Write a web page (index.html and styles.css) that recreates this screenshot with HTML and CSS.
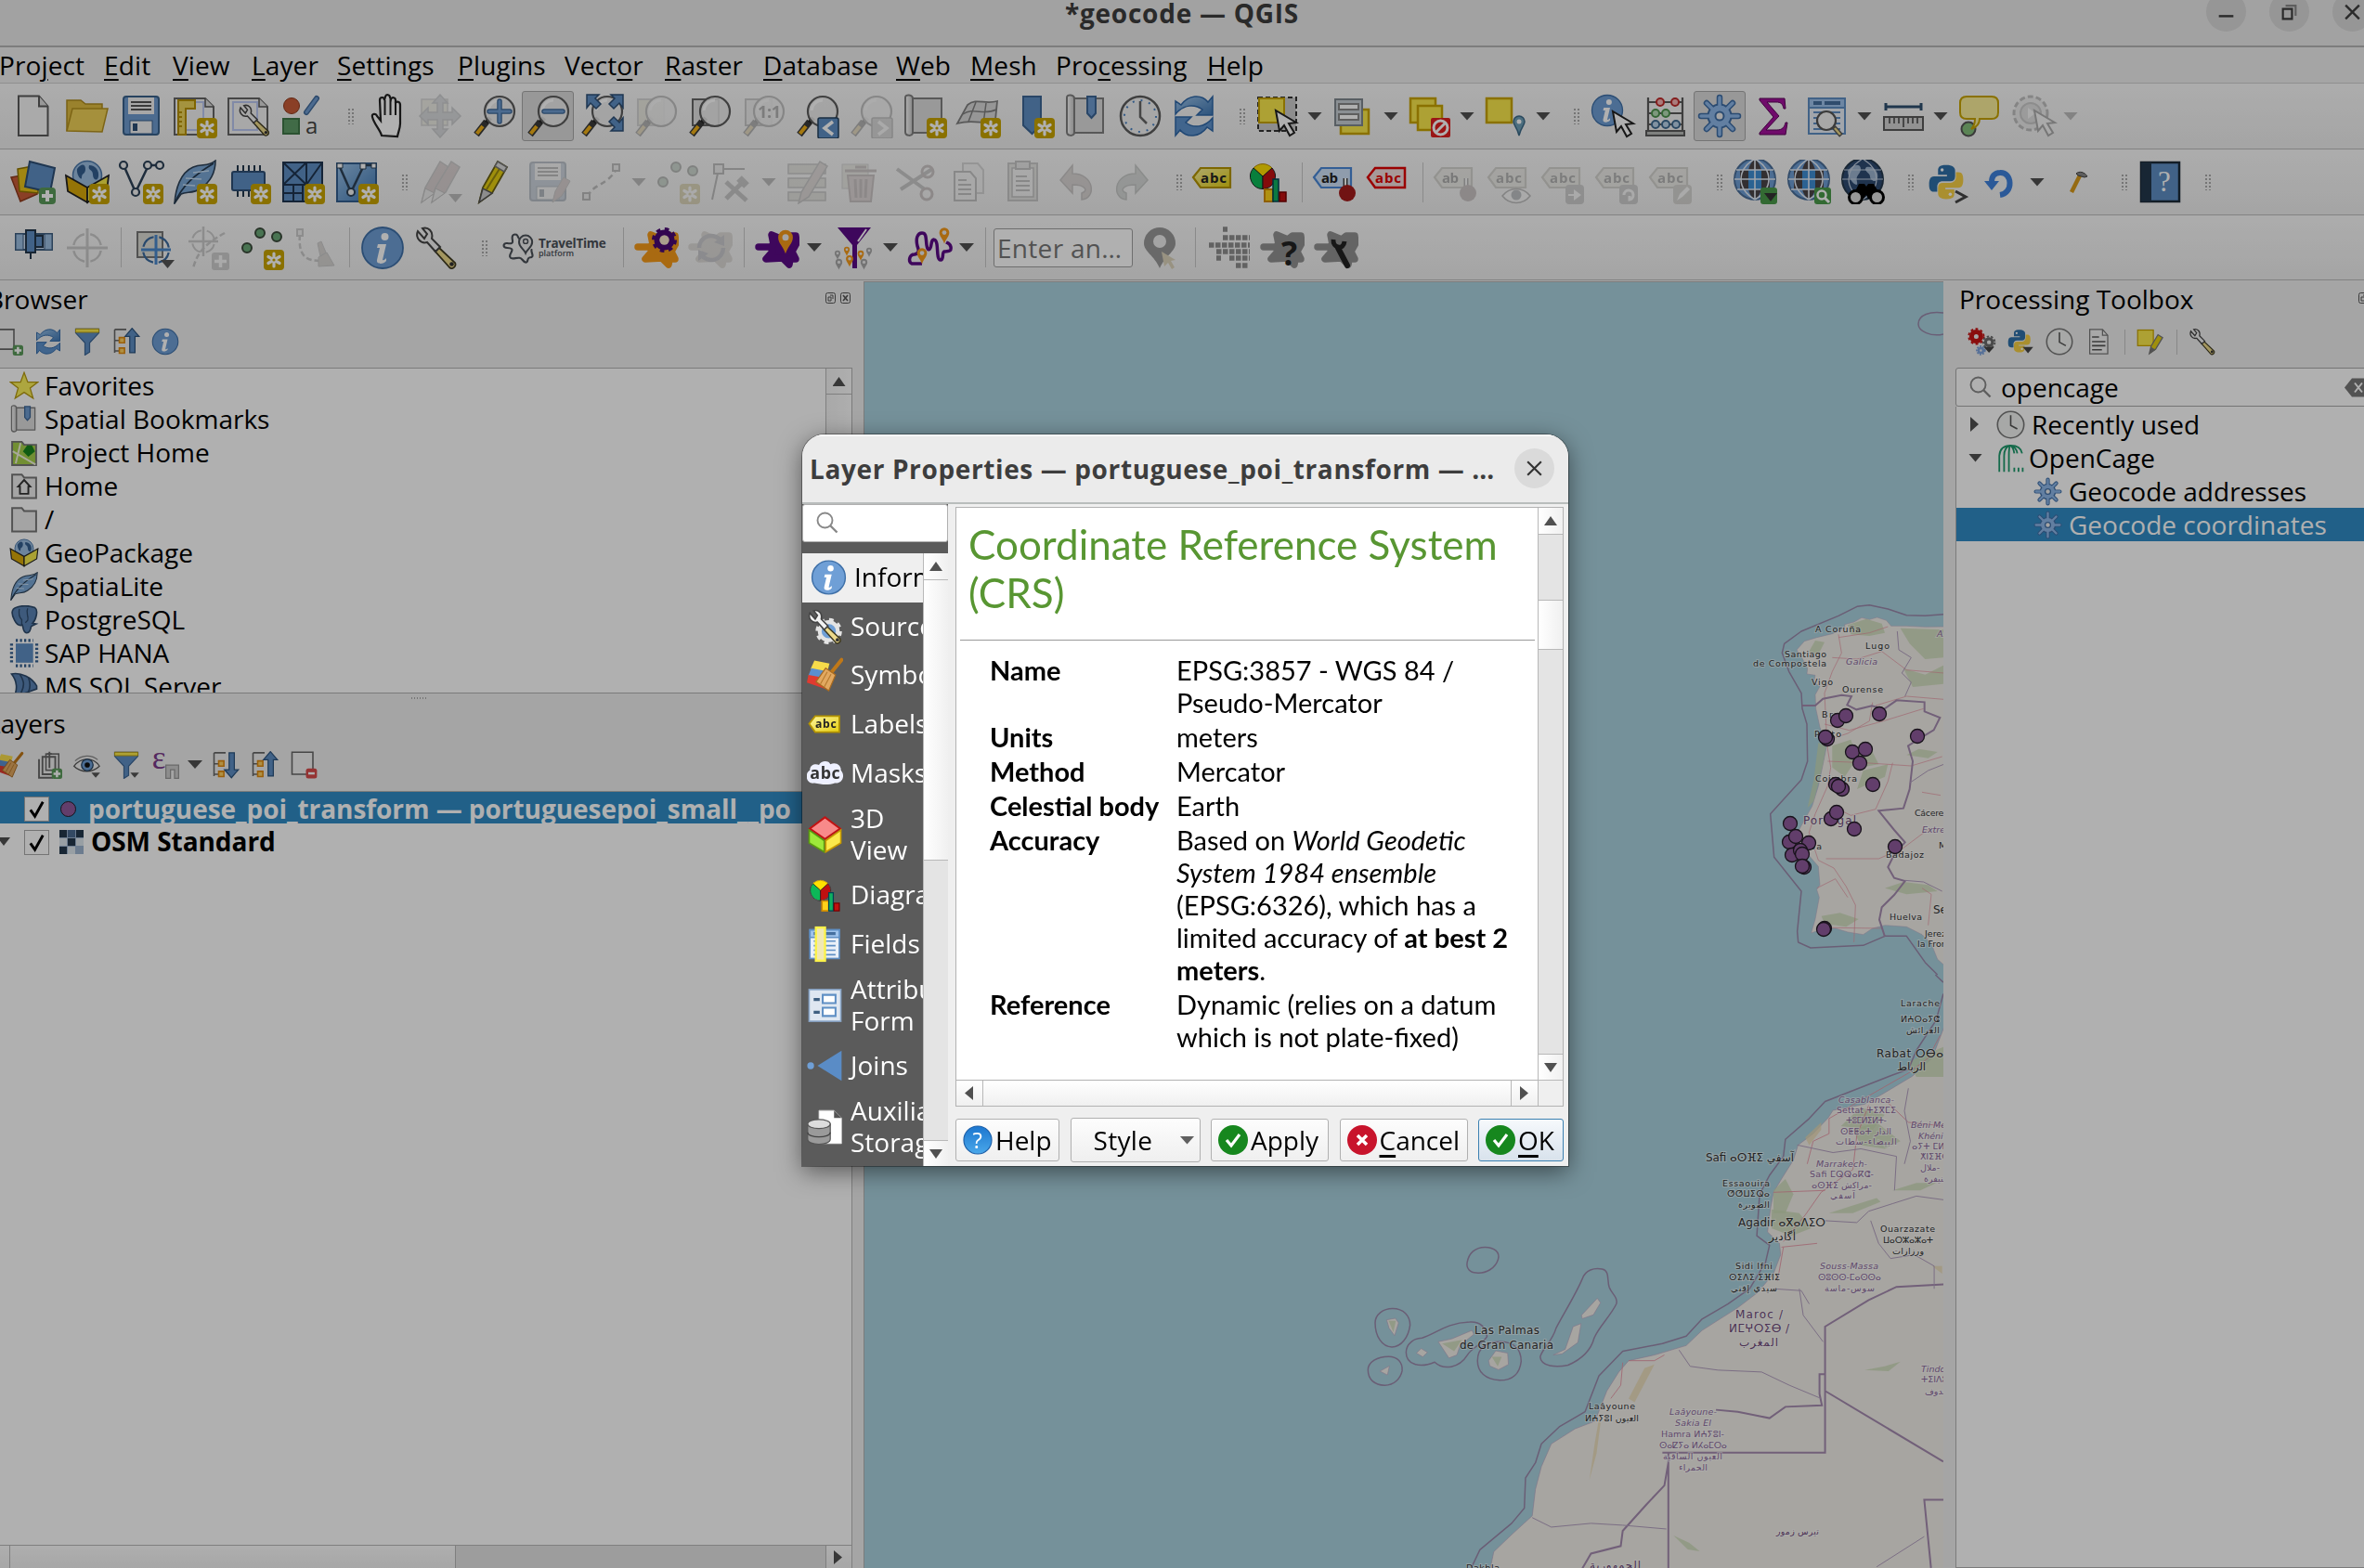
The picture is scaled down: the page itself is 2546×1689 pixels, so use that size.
FILE: index.html
```html
<!DOCTYPE html>
<html lang="en">
<head>
<meta charset="utf-8">
<title>*geocode — QGIS</title>
<link rel="stylesheet" href="styles.css">
</head>
<body>
<svg class="grads" width="0" height="0">
<defs>
<linearGradient id="gBlue" x1="0" y1="0" x2="1" y2="1"><stop offset="0" stop-color="#9cc4ea"/><stop offset="1" stop-color="#3f78b5"/></linearGradient>
<linearGradient id="gSteel" x1="0" y1="0" x2="1" y2="0"><stop offset="0" stop-color="#fff"/><stop offset="1" stop-color="#c4c4c4"/></linearGradient>
<linearGradient id="gYel" x1="0" y1="0" x2="1" y2="1"><stop offset="0" stop-color="#fdf6a0"/><stop offset="1" stop-color="#e6cf12"/></linearGradient>
<linearGradient id="gHelp" x1="0" y1="0" x2="0" y2="1"><stop offset="0" stop-color="#1c76cf"/><stop offset="1" stop-color="#4aa8ea"/></linearGradient>
</defs>
</svg>
<svg class="symbols">
<symbol id="badge" viewBox="0 0 48 48"><rect x="26" y="26" width="22" height="22" rx="4" fill="#c8a400"/><path d="M37 30v14M30.900 33.500l12.200 7M30.900 40.500l12.200-7" stroke="#fff" stroke-width="3.200" stroke-linecap="round"/><circle cx="37" cy="37" r="1.600" fill="#c8a400"/></symbol>
<symbol id="plus" viewBox="0 0 48 48"><rect x="30" y="30" width="18" height="18" rx="4" fill="#5a9a5a"/><path d="M39 33v12M33 39h12" stroke="#fff" stroke-width="4"/></symbol>
<symbol id="caretb" viewBox="0 0 48 48"><path d="M31 37h15l-7.500 9z" fill="#555"/></symbol>
<symbol id="lens" viewBox="0 0 48 48"><path d="M5 44L16 30" stroke="#3a3a3a" stroke-width="7"/><path d="M5.500 43L12 35" stroke="#f0b018" stroke-width="4"/><path d="M16 31l4-5" stroke="#222" stroke-width="5"/><circle cx="30" cy="19" r="16" fill="#ededed" fill-opacity=".9" stroke="#5c5c5c" stroke-width="2.200"/><path d="M18 18a12 12 0 0 1 12-11" stroke="#fff" stroke-width="3" fill="none"/></symbol>
<symbol id="new" viewBox="0 0 48 48"><path d="M8 2.500h22l9.500 11V45H8z" fill="#f6f6f6" stroke="#5a5a5a" stroke-width="2"/><path d="M30 2.500v11h9.500" fill="#ddd" stroke="#5a5a5a" stroke-width="2"/></symbol>
<symbol id="open" viewBox="0 0 48 48"><path d="M2 40V7h15l5 4h18v7" fill="#e0bd42" stroke="#b08d1e" stroke-width="1.500"/><path d="M2 40L8 16h38l-6 25z" fill="#efd158" stroke="#b5921f" stroke-width="1.500"/></symbol>
<symbol id="save" viewBox="0 0 48 48"><rect x="5" y="3" width="38" height="41" rx="3" fill="#6f9bd0" stroke="#39618c" stroke-width="2"/><rect x="10" y="4" width="28" height="18" fill="#f2f2f2"/><path d="M13 9h22M13 13h22M13 17h22" stroke="#555" stroke-width="2"/><rect x="12" y="29" width="24" height="14" fill="#f2f2f2" stroke="#39618c"/><rect x="15" y="32" width="5" height="8" fill="#2d4f76"/></symbol>
<symbol id="layout" viewBox="0 0 48 48"><path d="M2 5h33l9 9v30H2z" fill="#f4f4f4" stroke="#666" stroke-width="2"/><path d="M7 9h26v30H7z" fill="none" stroke="#bcc9f2" stroke-width="2"/><path d="M35 5v9h9" fill="#ddd" stroke="#555" stroke-width="1.500"/></symbol>
<symbol id="nlayout" viewBox="0 0 48 48"><use href="#layout"/><path d="M6 7h18v9H14v28H6z" fill="#eed55c" stroke="#b99300" stroke-width="2"/><path d="M6 20h4M6 25h4M6 30h4M6 35h4" stroke="#b99300" stroke-width="2"/><use href="#badge"/></symbol>
<symbol id="wr" viewBox="0 0 48 48"><path d="M26 23l-4 4 16 18c3 3 8-1 6-5z" fill="#ecd98a" stroke="#3f3a20" stroke-width="1.800"/><circle cx="40.500" cy="41.500" r="2.300" fill="#333"/><path d="M4 6c-3 7 3 14 10 12l9 10 5-5-9-9C21 6 15 1 9 3l5 6-3 5z" fill="#f2f2f2" stroke="#444" stroke-width="2"/></symbol>
<symbol id="mlayout" viewBox="0 0 48 48"><use href="#layout"/><use href="#wr" x="12" y="10" width="36" height="37"/></symbol>
<symbol id="styles" viewBox="0 0 48 48"><circle cx="12" cy="13" r="8.500" fill="#c95c38" stroke="#8f3a1c"/><path d="M28 20L39 5" stroke="#416b9c" stroke-width="6" stroke-linecap="round"/><path d="M28 20L39 5" stroke="#6f9bd0" stroke-width="3" stroke-linecap="round"/><rect x="3" y="27" width="17" height="16" fill="#5f9b68" stroke="#3f7748" stroke-width="2"/><text x="27" y="43" font-size="24" font-family="Open Sans" fill="#444">a</text></symbol>
<symbol id="hand" viewBox="0 0 48 48"><g transform="translate(3 0)"><path d="M16 45c-2-7-8-12-10-20-1-4 4-4 5-1l4 5-1-22c0-4 5-4 5 0l1-4c1-3 5-2 5 1l1 2c1-3 5-2 5 1v3c1-2 5-2 5 2v20c0 5-2 9-3 14z" fill="#fff" stroke="#222" stroke-width="2.200"/><path d="M19.500 7v16M25.500 6v17M31 9v14" stroke="#222" stroke-width="2"/></g></symbol>
<symbol id="pan" viewBox="0 0 48 48"><rect x="4" y="6" width="28" height="28" fill="#e4dfb2" stroke="#999" stroke-width="1.500"/><path d="M24 1l8 9h-5v10h10v-5l9 9-9 9v-5H27v10h5l-8 9-8-9h5V28H11v5l-9-9 9-9v5h10V10h-5z" fill="#a0aabb" stroke="#7c8490" stroke-width="1.500"/></symbol>
<symbol id="zin" viewBox="0 0 48 48"><use href="#lens"/><path d="M30 8v22M19 19h22" stroke="#3c6696" stroke-width="5.500" stroke-linecap="round"/><path d="M30 8v22M19 19h22" stroke="#6f9bd0" stroke-width="3" stroke-linecap="round"/></symbol>
<symbol id="zout" viewBox="0 0 48 48"><use href="#lens"/><path d="M20 19h20" stroke="#3c6696" stroke-width="5.500" stroke-linecap="round"/><path d="M20 19h20" stroke="#6f9bd0" stroke-width="3" stroke-linecap="round"/></symbol>
<symbol id="zfull" viewBox="0 0 48 48"><use href="#lens"/><g fill="#5f8fc4" stroke="#2d4f76" stroke-width="1.500"><path d="M8 1h13l-4 4 6 6-5 5-6-6-4 5z"/><path d="M47 1H34l4 4-6 6 5 5 6-6 4 5z"/><path d="M47 40H34l4-4-6-6 5-5 6 6 4-5z"/></g></symbol>
<symbol id="zsel" viewBox="0 0 48 48"><rect x="5" y="6" width="28" height="28" fill="#dcd9a4" stroke="#999" stroke-width="2"/><use href="#lens"/></symbol>
<symbol id="zlay" viewBox="0 0 48 48"><rect x="6" y="6" width="28" height="28" fill="#e2e2e2" stroke="#666" stroke-width="2"/><use href="#lens"/></symbol>
<symbol id="zone" viewBox="0 0 48 48"><rect x="5" y="6" width="28" height="28" fill="#e2e2e2" stroke="#777" stroke-width="2"/><use href="#lens"/><text x="18" y="26" font-size="18" font-weight="700" font-family="Open Sans" textLength="25" fill="#333">1:1</text></symbol>
<symbol id="zlast" viewBox="0 0 48 48"><use href="#lens"/><rect x="25" y="26" width="22" height="22" rx="2" fill="#5f8fc4" stroke="#24415f" stroke-width="1.500"/><path d="M41 30l-9 7 9 7" fill="none" stroke="#fff" stroke-width="3.500"/></symbol>
<symbol id="znext" viewBox="0 0 48 48"><use href="#lens"/><rect x="25" y="26" width="22" height="22" rx="2" fill="#aaa" stroke="#666" stroke-width="1.500"/><path d="M32 30l9 7-9 7" fill="none" stroke="#fff" stroke-width="3.500"/></symbol>
<symbol id="mapv" viewBox="0 0 48 48"><path d="M11 5h31v37H11z" fill="#dedede" stroke="#808080" stroke-width="2"/><path d="M11 42c0 4-8 4-8-1V4c0-4 8-3 8 1z" fill="url(#gSteel)" stroke="#808080" stroke-width="2"/></symbol>
<symbol id="nmap" viewBox="0 0 48 48"><use href="#mapv"/><use href="#badge"/></symbol>
<symbol id="n3d" viewBox="0 0 48 48"><path d="M1 32L12 12c10-8 18 0 32-4l-2 20c-10 8-20-2-41 4z" fill="#dadada" stroke="#808080" stroke-width="1.800"/><path d="M7 22c12-8 22 2 36-5M21 9l-8 21M32 10l-3 22" fill="none" stroke="#808080" stroke-width="1.500"/><use href="#badge"/></symbol>
<symbol id="nbm" viewBox="0 0 48 48"><path d="M14 3h19v31l-9.500 9L14 34z" fill="#5f8fc4" stroke="#3c6696" stroke-width="2"/><use href="#badge"/></symbol>
<symbol id="bm" viewBox="0 0 48 48"><use href="#mapv"/><path d="M25 3h9v18l-4.500 5L25 21z" fill="#6f9bd0" stroke="#3c6696" stroke-width="2"/></symbol>
<symbol id="clock" viewBox="0 0 48 48"><circle cx="24" cy="24" r="21" fill="#f2f2f2" stroke="#5c5c5c" stroke-width="2.500"/><circle cx="24" cy="24" r="17" fill="none" stroke="#4a83c4" stroke-width="2" stroke-dasharray="2 6.900"/><path d="M24 8v17l7 7" fill="none" stroke="#666" stroke-width="2.500"/></symbol>
<symbol id="clk" viewBox="0 0 48 48"><circle cx="24" cy="24" r="22" fill="#f2f4f2" stroke="#777" stroke-width="2.500"/><path d="M24 8v17l11 6" fill="none" stroke="#555" stroke-width="2.500"/></symbol>
<symbol id="refresh" viewBox="0 0 48 48"><path d="M4 22V8l6 4C18 1 32 0 39 9l5-6v20H27l6-6c-8-6-20-6-29 5z" fill="url(#gBlue)" stroke="#2f68a8" stroke-width="1.500"/><path d="M44 26v14l-6-4C30 47 16 48 9 39l-5 6V25h17l-6 6c8 6 20 6 29-5z" fill="#5f93cc" stroke="#2f68a8" stroke-width="1.500"/></symbol>
<symbol id="cursor" viewBox="0 0 48 48"><path d="M22 18l4 22 5-6 6 11 5-3-6-10 8-1z" fill="#fff" stroke="#222" stroke-width="2"/></symbol>
<symbol id="select" viewBox="0 0 48 48"><rect x="3" y="4" width="41" height="36" fill="#ccc" stroke="#333" stroke-width="2" stroke-dasharray="5 3"/><rect x="4" y="5" width="27" height="26" fill="#fbe94c" stroke="#c8a400" stroke-width="2"/><use href="#cursor"/></symbol>
<symbol id="selform" viewBox="0 0 48 48"><rect x="10" y="17" width="30" height="26" fill="#fbe94c" stroke="#c8a400" stroke-width="2.500"/><rect x="4" y="6" width="29" height="28" fill="#c8cfd6" stroke="#808890" stroke-width="2"/><rect x="8" y="11" width="21" height="6" fill="#fff" stroke="#888" stroke-width="2"/><rect x="8" y="22" width="21" height="6" fill="#fff" stroke="#888" stroke-width="2"/></symbol>
<symbol id="desel" viewBox="0 0 48 48"><rect x="3" y="5" width="27" height="26" fill="#fbe94c" stroke="#c8a400" stroke-width="2.500"/><rect x="11" y="13" width="26" height="26" fill="#fbe94c" stroke="#c8a400" stroke-width="2.500"/><rect x="25" y="26" width="21" height="21" rx="2" fill="#e02020"/><circle cx="35.500" cy="36.500" r="7.500" fill="none" stroke="#fff" stroke-width="3"/><path d="M30 42l11-11" stroke="#fff" stroke-width="3"/></symbol>
<symbol id="selloc" viewBox="0 0 48 48"><rect x="3" y="5" width="27" height="26" fill="#fbe94c" stroke="#c8a400" stroke-width="2.500"/><path d="M38 45c-2-9-6-11-6-15a6 6 0 0 1 12 0c0 4-4 6-6 15z" fill="#6ea0b8" stroke="#3c6a88" stroke-width="1.500"/><circle cx="38" cy="30" r="2.500" fill="#fff"/></symbol>
<symbol id="info" viewBox="0 0 48 48"><circle cx="24" cy="24" r="22" fill="#6f9fd6" stroke="#3f70a8" stroke-width="1.800"/><circle cx="26.500" cy="12" r="4" fill="#fff"/><path d="M19 20h9l-4 17c1 1 3-1 4-2v3c-3 4-11 4-10-1l3-13h-3z" fill="#fff"/></symbol>
<symbol id="identify" viewBox="0 0 48 48"><use href="#info" x="1" y="0" width="36" height="36"/><use href="#cursor" x="3" y="1"/></symbol>
<symbol id="abacus" viewBox="0 0 48 48"><path d="M5 4v36M42 4v36M5 9h37M5 21h37M5 33h37" stroke="#5a5a5a" stroke-width="2.200"/><rect x="3" y="40" width="41" height="5" fill="#b9bcb9" stroke="#5a5a5a" stroke-width="2"/><g stroke-width="2" fill="#f6b4b4" stroke="#c02a2a"><circle cx="18" cy="9" r="4"/><circle cx="34" cy="9" r="4"/></g><g stroke-width="2" fill="#b5dcb5" stroke="#4f944f"><circle cx="13" cy="21" r="4"/><circle cx="24" cy="21" r="4"/></g><g stroke-width="2" fill="#bcd4ea" stroke="#3f6a90"><circle cx="13" cy="33" r="4"/><circle cx="24" cy="33" r="4"/><circle cx="35" cy="33" r="4"/></g></symbol>
<symbol id="gear" viewBox="0 0 48 48"><g stroke="#3f6ea6" stroke-width="6.500" stroke-linecap="round"><path d="M24 4v40M4 24h40M10 10l28 28M38 10L10 38"/></g><circle cx="24" cy="24" r="12.500" fill="#8fb8ea" stroke="#3f6ea6" stroke-width="2"/><g stroke="#8fb8ea" stroke-width="3.500" stroke-linecap="round"><path d="M24 4v12M24 44V32M4 24h12M44 24H32M10 10l8 8M38 38l-8-8M38 10l-8 8M10 38l8-8"/></g><circle cx="24" cy="24" r="4.500" fill="#eee" stroke="#3f6ea6" stroke-width="2"/></symbol>
<symbol id="sigma" viewBox="0 0 48 48"><path d="M9 5h27l1 11h-2c-1-5-3-7-8-7H17l13 15-14 15h12c5 0 8-3 9-8h2l-2 13H9v-2l15-17L9 7z" fill="#a3109c" stroke="#5c085a" stroke-width="1"/></symbol>
<symbol id="table" viewBox="0 0 48 48"><rect x="4" y="5" width="39" height="38" fill="#eaf0f8" stroke="#5f8fc4" stroke-width="2"/><path d="M4 5h39v10H4z" fill="#9fc3ec" stroke="#5f8fc4" stroke-width="2"/><path d="M9 10h9M21 10h17" stroke="#456f9f" stroke-width="4"/><path d="M9 20h29M9 26h29M9 32h29M9 38h29" stroke="#5f8fc4" stroke-width="2"/></symbol>
<symbol id="tbl" viewBox="0 0 48 48"><use href="#table"/><path d="M31 36l8 9" stroke="#555" stroke-width="5"/><path d="M32 37l6 7" stroke="#ecd98a" stroke-width="2.500"/><circle cx="23" cy="29" r="10" fill="#f2f2f2" stroke="#555" stroke-width="2.200"/></symbol>
<symbol id="ruler" viewBox="0 0 48 48"><path d="M5 14h38M5 10v8M43 10v8" stroke="#2f5070" stroke-width="3"/><rect x="3" y="25" width="42" height="14" fill="#d4d4d4" stroke="#5a5a5a" stroke-width="2"/><path d="M9 26v6M14 26v6M19 26v6M24 26v10M29 26v6M34 26v6M39 26v6" stroke="#444" stroke-width="1.500"/></symbol>
<symbol id="tip" viewBox="0 0 48 48"><circle cx="12" cy="38" r="7.500" fill="#84c07c" stroke="#555" stroke-width="2"/><path d="M10 3h27q7 0 7 7v10q0 7-7 7H24c0 6-3 9-9 11 3-3 4-7 4-11h-9q-7 0-7-7V10q0-7 7-7z" fill="#fbf09a" stroke="#c8a400" stroke-width="2"/></symbol>
<symbol id="rungear" viewBox="0 0 48 48"><circle cx="21" cy="21" r="18" fill="#ddd" stroke="#555" stroke-width="3" stroke-dasharray="6 3"/><circle cx="21" cy="21" r="11" fill="#bbb" stroke="#777" stroke-width="2"/><path d="M18 15l8 6-8 6z" fill="#fff"/><use href="#cursor" x="3"/></symbol>
<symbol id="dsrc" viewBox="0 0 48 48"><path d="M0 19l22-4 6 22-18 8z" fill="#c95c38" stroke="#8f3a1c" stroke-width="1.500"/><path d="M7 10l22-4v30l-20-2z" fill="#e8c21a" stroke="#8f7400" stroke-width="1.500"/><path d="M20 2l27 7-5 26-27-6z" fill="#5f8fc4" stroke="#2d4f76" stroke-width="2"/><use href="#plus"/></symbol>
<symbol id="gpkg" viewBox="0 0 48 48"><circle cx="24" cy="17" r="15.500" fill="#9dbfe2" stroke="#4a78aa" stroke-width="1.500"/><path d="M13 10c4-6 9-6 9 0s-4 4-4 9-6-3-5-9zM26 6c7 0 11 6 10 12s-6 4-6-2-6-4-4-10z" fill="#335f90"/><path d="M1 17l23 13v16L3 34z" fill="#d8a80a" stroke="#222" stroke-width="1.800"/><path d="M47 17L24 30v16l21-12z" fill="#f6ea4a" stroke="#222" stroke-width="1.800"/></symbol>
<symbol id="ngpkg" viewBox="0 0 48 48"><use href="#gpkg"/><use href="#badge"/></symbol>
<symbol id="nshp" viewBox="0 0 48 48"><path d="M6 8l12 27L32 6h13" fill="none" stroke="#2d4258" stroke-width="2.500"/><g fill="#f2f2f2" stroke="#2d4258" stroke-width="2.200"><circle cx="5" cy="6" r="4"/><circle cx="31" cy="6" r="4"/><circle cx="44" cy="6" r="4"/><circle cx="18" cy="35" r="4"/></g><use href="#badge"/></symbol>
<symbol id="feather" viewBox="0 0 48 48"><path d="M2 47C3 32 8 14 22 8 32 4 38 8 46 1c0 12-4 22-16 30-8 6-15 3-21 6z" fill="#7aa7d6" stroke="#2d4258" stroke-width="1.600"/><path d="M2 47C10 28 24 16 44 4" stroke="#24384c" stroke-width="1.600" fill="none"/><path d="M14 20l17 1M11 27l13 1M22 14l17-2" stroke="#c4ddf4" stroke-width="1.500"/></symbol>
<symbol id="nspl" viewBox="0 0 48 48"><use href="#feather"/><use href="#badge"/></symbol>
<symbol id="chip" viewBox="0 0 48 48"><path d="M12 6v8M18 6v8M24 6v8M30 6v8M36 6v8M12 32v8M18 32v8M24 32v8" stroke="#24384c" stroke-width="2"/><rect x="6" y="13" width="35" height="20" rx="2" fill="#5f8fc4" stroke="#2d4f76" stroke-width="2"/><use href="#badge"/></symbol>
<symbol id="nmesh" viewBox="0 0 48 48"><rect x="3" y="3" width="42" height="42" fill="#5f8fc4"/><path d="M3 3h42v42H3zM3 27h42M28 3v24M3 3l25 24M28 3L3 27M45 3L28 27M14 27v18M24 27v18M3 36h21" fill="none" stroke="#1f3550" stroke-width="2"/><use href="#badge"/></symbol>
<symbol id="nvirt" viewBox="0 0 48 48"><rect x="3" y="4" width="42" height="41" fill="url(#gBlue)" stroke="#335f90" stroke-width="2"/><path d="M6 8l12 27L32 6h12" fill="none" stroke="#2d4258" stroke-width="2.500"/><circle cx="18" cy="35" r="4" fill="#f2f2f2" stroke="#2d4258" stroke-width="2"/><path d="M3 4h6v5H3zM28 4h6v6h-6zM40 4h5v5h-5z" fill="#fff" stroke="#2d4258"/><use href="#badge"/></symbol>
<symbol id="pen" viewBox="0 0 48 48"><g transform="translate(-2 0)"><path d="M10 46l4-16L30 2l10 6-16 28z" fill="#e6cf12" stroke="#6a6010" stroke-width="1.800"/><path d="M18 32L35 5" stroke="#9a8a10" stroke-width="2"/><path d="M30 2l10 6-3 5-10-6z" fill="#ddd" stroke="#777" stroke-width="1.500"/><path d="M10 46l4-15 10 5z" fill="#ccc" stroke="#555" stroke-width="1.500"/></g></symbol>
<symbol id="pens" viewBox="0 0 48 48"><g fill="#b98a8a" stroke="#777" stroke-width="1.500"><path d="M4 46l4-16L24 2l9 6-14 27z"/><path d="M15 46l4-16L36 2l9 6-15 27z"/></g><path d="M4 46l4-15 10 5zM15 46l4-15 10 5z" fill="#ddd" stroke="#666"/><path d="M33 37h15l-7.500 9z" fill="#555"/></symbol>
<symbol id="savep" viewBox="0 0 48 48"><use href="#save"/><path d="M29 46l3-12 9-15 7 4-9 16z" fill="#b98a8a" stroke="#777"/></symbol>
<symbol id="digl" viewBox="0 0 48 48"><path d="M9 40C14 26 30 28 40 10" fill="none" stroke="#555" stroke-width="2.500" stroke-dasharray="6 4"/><path d="M4 36h7v7H4zM36 5h7v7h-7z" fill="#ddd" stroke="#555" stroke-width="2"/></symbol>
<symbol id="pts" viewBox="0 0 48 48"><g fill="#6aa878" stroke="#3a4a3a" stroke-width="2"><circle cx="22" cy="8" r="5"/><circle cx="40" cy="12" r="5"/><circle cx="8" cy="24" r="5"/></g><use href="#badge"/></symbol>
<symbol id="vert" viewBox="0 0 48 48"><path d="M10 10h28M10 10L3 43" stroke="#555" stroke-width="2"/><path d="M5 5h10v10H5z" fill="#ddd" stroke="#555" stroke-width="2"/><path d="M18 42l18-18M18 24l22 20" stroke="#777" stroke-width="5"/><path d="M32 20l8 8" stroke="#777" stroke-width="8"/></symbol>
<symbol id="form" viewBox="0 0 48 48"><path d="M3 5h40v10H3zM3 20h40v10H3zM3 35h40v9H3z" fill="#c9c9b0" stroke="#777" stroke-width="1.500"/><path d="M14 47l3-12L37 2l8 5-20 33z" fill="#c9aaa0" stroke="#777" stroke-width="1.500"/></symbol>
<symbol id="trash" viewBox="0 0 48 48"><rect x="3" y="5" width="28" height="26" fill="#d8d8b8" stroke="#999"/><path d="M9 17h28l-3 28H12z" fill="#c9a0a0" stroke="#8a6a6a" stroke-width="2"/><path d="M6 12h34M17 8h12M17 21l1 20M23 21v20M29 21l-1 20" stroke="#8a6a6a" stroke-width="3" fill="none"/></symbol>
<symbol id="cut" viewBox="0 0 48 48"><path d="M4 10l30 22M8 32L42 10" stroke="#777" stroke-width="4"/><circle cx="37" cy="13" r="6" fill="none" stroke="#8a6a6a" stroke-width="3"/><circle cx="36" cy="37" r="6" fill="none" stroke="#8a6a6a" stroke-width="3"/></symbol>
<symbol id="copy" viewBox="0 0 48 48"><path d="M17 4h16l6 7v25H17z" fill="#eee" stroke="#999" stroke-width="2"/><path d="M8 13h17l6 7v24H8z" fill="#f4f4f4" stroke="#666" stroke-width="2"/><path d="M12 22h9M12 27h14M12 32h14M12 37h14" stroke="#666" stroke-width="2"/></symbol>
<symbol id="paste" viewBox="0 0 48 48"><rect x="8" y="4" width="31" height="40" fill="#c8c8b8" stroke="#777" stroke-width="2"/><path d="M12 9h23v31H12z" fill="#f4f4f4" stroke="#666" stroke-width="1.500"/><rect x="16" y="2" width="15" height="8" fill="#ccc" stroke="#666" stroke-width="2"/><path d="M16 18h12M16 23h15M16 28h15M16 33h15" stroke="#666" stroke-width="2"/></symbol>
<symbol id="undo" viewBox="0 0 48 48"><path d="M6 22L19 6v9c24 0 26 27 10 28v-7c7-2 5-9-10-9v9z" fill="#b09a90" stroke="#776a66" stroke-width="1.500"/></symbol>
<symbol id="redo" viewBox="0 0 48 48"><path d="M42 22L29 6v9C5 15 3 42 19 43v-7c-7-2-5-9 10-9v9z" fill="#9aa8a0" stroke="#6a776f" stroke-width="1.500"/></symbol>
<symbol id="abc" viewBox="0 0 48 48"><path d="M3 19l8-10h32v21H11z" fill="url(#gYel)" stroke="#b59500" stroke-width="2.200"/><text x="11" y="25" font-size="15" font-weight="700" font-family="Open Sans" textLength="28" fill="#222">abc</text></symbol>
<symbol id="diag" viewBox="0 0 48 48"><circle cx="18" cy="18" r="13.500" fill="#fff"/><path d="M18 18L8 9a13.500 13.500 0 0 1 20 0z" fill="#ffe000" stroke="#b88a00"/><path d="M18 18L8 9a13.500 13.500 0 0 0 10 22.500z" fill="#0db858" stroke="#222"/><path d="M18 18L28 9a13.500 13.500 0 0 1-10 22.500z" fill="#c01010" stroke="#222"/><path d="M20 32h9v13h-9z" fill="#ffd21a" stroke="#d08a00" stroke-width="2"/><path d="M29 21h6v24h-6z" fill="#10b060" stroke="#045" stroke-width="1.500"/><path d="M36 35h7v10h-7z" fill="#c01010" stroke="#700" stroke-width="1.500"/></symbol>
<symbol id="abpin" viewBox="0 0 48 48"><path d="M3 19l8-10h32v21H11z" fill="#cfe2fa" stroke="#4a88d8" stroke-width="2.200"/><text x="11" y="25" font-size="15" font-weight="700" font-family="Open Sans" textLength="18" fill="#222">ab</text><path d="M37 20v14" stroke="#444" stroke-width="5"/><path d="M37 20v12" stroke="#fff" stroke-width="2"/><circle cx="39" cy="36" r="9" fill="#a41c1c"/></symbol>
<symbol id="abpinoff" viewBox="0 0 48 48"><path d="M3 19l8-10h32v21H11z" fill="#e2deC4" stroke="#99957a" stroke-width="2.200"/><text x="11" y="25" font-size="15" font-weight="700" font-family="Open Sans" textLength="18" fill="#222">ab</text><path d="M37 20v14" stroke="#444" stroke-width="5"/><path d="M37 20v12" stroke="#fff" stroke-width="2"/><circle cx="39" cy="36" r="9" fill="#8a6a6a"/></symbol>
<symbol id="abred" viewBox="0 0 48 48"><path d="M3 19l8-10h32v21H11z" fill="#f2dede" stroke="#e00000" stroke-width="2.500"/><text x="11" y="25" font-size="15" font-weight="700" font-family="Open Sans" textLength="28" fill="#e00000">abc</text></symbol>
<symbol id="abcoff" viewBox="0 0 48 48"><path d="M3 19l8-10h32v21H11z" fill="#e2dec4" stroke="#99957a" stroke-width="2.200"/><text x="11" y="25" font-size="15" font-weight="700" font-family="Open Sans" textLength="28" fill="#333">abc</text></symbol>
<symbol id="abeye" viewBox="0 0 48 48"><use href="#abcoff"/><path d="M18 39c8-10 22-10 30 0-8 10-22 10-30 0z" fill="#fff" stroke="#555" stroke-width="1.500"/><circle cx="33" cy="38" r="5.500" fill="#567"/></symbol>
<symbol id="abmv" viewBox="0 0 48 48"><use href="#abcoff"/><rect x="28" y="27" width="20" height="21" rx="4" fill="#888"/><path d="M31 37h6v-5l8 6-8 6v-5h-6z" fill="#fff"/></symbol>
<symbol id="abrot" viewBox="0 0 48 48"><use href="#abcoff"/><rect x="28" y="27" width="20" height="21" rx="4" fill="#888"/><path d="M33 38a5 5 0 1 1 6 5v-4" fill="none" stroke="#fff" stroke-width="3"/></symbol>
<symbol id="abed" viewBox="0 0 48 48"><use href="#abcoff"/><rect x="28" y="27" width="20" height="21" rx="4" fill="#a09c88"/><path d="M32 44l3-7 8-8 3 3-8 8z" fill="#fff"/></symbol>
<symbol id="globe" viewBox="0 0 48 48"><circle cx="24" cy="21" r="22" fill="#6f9fd6" stroke="#4a6f9a" stroke-width="2"/><path d="M8 11h32v21H8z" fill="#4a4448"/><path d="M17 11h14v21H17z" fill="#3f8ed4"/><path d="M17 11c2-7 5-11 7-11s5 4 7 11zM17 32c2 7 5 10 7 10s5-3 7-10z" fill="#4a4448"/><path d="M4 11h40M2 21h44M5 32h38M24-1v44M24-1c-20 12-20 32 0 44M24-1c20 12 20 32 0 44" fill="none" stroke="#e6eef8" stroke-width="1.600"/></symbol>
<symbol id="globea" viewBox="0 0 48 48"><use href="#globe"/><rect x="30" y="30" width="18" height="18" rx="3" fill="#4a9a4a"/><path d="M34 36h14l-7 9z" fill="#333"/></symbol>
<symbol id="globeb" viewBox="0 0 48 48"><use href="#globe"/><rect x="30" y="30" width="18" height="18" rx="3" fill="#4a9a4a"/><circle cx="38" cy="38" r="4.500" fill="none" stroke="#fff" stroke-width="2.500"/><path d="M41 41l5 5" stroke="#fff" stroke-width="3"/></symbol>
<symbol id="globec" viewBox="0 0 48 48"><circle cx="24" cy="21" r="22" fill="#2d4a72" stroke="#24384c" stroke-width="2"/><path d="M8 12c6-8 14-8 14-2s-6 6-4 14-10-2-10-12zM28 8c8-2 14 6 12 12s-8 2-8-2-8-6-4-10z" fill="#9db4cf"/><path d="M4 11h40M2 21h44M24-1c-20 12-20 32 0 44M24-1c20 12 20 32 0 44" fill="none" stroke="#c6d2e2" stroke-width="1.200"/><path d="M14 38l6-12h6l2 3 2-3h6l7 12-8 4h-5l-2-4-3 4h-6z" fill="#000"/><circle cx="16.500" cy="40.500" r="7" fill="#ddd" stroke="#000" stroke-width="3"/><circle cx="39.500" cy="40.500" r="7" fill="#ddd" stroke="#000" stroke-width="3"/></symbol>
<symbol id="pyb" viewBox="0 0 48 48"><path d="M24 3c-9 0-10 3-10 7v5h11v2H9c-5 0-6 5-6 10s1 9 6 9h4v-6c0-4 2-7 7-7h9c4 0 6-2 6-6V10c0-4-3-7-11-7z" fill="#2f70a8"/><circle cx="19" cy="9" r="2" fill="#fff"/><path d="M24 45c9 0 10-3 10-7v-5H23v-2h16c5 0 6-5 6-10s-1-9-6-9h-3v6c0 4-3 7-7 7h-9c-4 0-6 2-6 6v7c0 4 3 7 10 7z" fill="#f6cf45"/><circle cx="29" cy="39" r="2" fill="#fff"/></symbol>
<symbol id="py" viewBox="0 0 48 48"><use href="#pyb" x="3" y="3" width="42" height="42"/><path d="M34 34l11 6-11 6" fill="none" stroke="#444" stroke-width="3"/></symbol>
<symbol id="reload" viewBox="0 0 48 48"><path d="M24 38c15-2 13-25 0-24-6 0-9 4-9 10" fill="none" stroke="#3f82dc" stroke-width="6"/><path d="M7 23h16l-8 10z" fill="#3f82dc"/></symbol>
<symbol id="hammer" viewBox="0 0 48 48"><path d="M19 35L28 17" stroke="#d89a1a" stroke-width="4.500"/><path d="M24 15c3-3 9-2 12 3l-3 1-7-2z" fill="#888" stroke="#444"/></symbol>
<symbol id="book" viewBox="0 0 48 48"><rect x="4" y="3" width="41" height="42" fill="#5f8fc4" stroke="#1c2a38" stroke-width="2.500"/><rect x="4" y="3" width="11" height="42" fill="#24384c"/><text x="22" y="34" font-size="31" font-family="Liberation Serif" fill="#fff">?</text></symbol>
<symbol id="mover" viewBox="0 0 48 48"><g transform="translate(2 0)"><path d="M3 9h39v17H3z" fill="#cfe0f4" stroke="#3f5f80" stroke-width="2"/><path d="M3 9h8v17H3zM34 9h8v17h-8z" fill="#9dbfe2" stroke="#3f5f80"/><path d="M14 5h10v24H14zM19 29v7M24 11h8v12h-8z" fill="#5f8fc4" stroke="#24384c" stroke-width="2"/></g></symbol>
<symbol id="cross" viewBox="0 0 48 48"><circle cx="24" cy="24" r="15" fill="none" stroke="#777" stroke-width="2.500" stroke-dasharray="17 6.500" stroke-dashoffset="-3"/><path d="M24 3v42M2 24h44" stroke="#777" stroke-width="3"/></symbol>
<symbol id="gcp" viewBox="0 0 48 48"><path d="M6 7h27v27H6z" fill="#dcdcd6" stroke="#777" stroke-width="2"/><circle cx="26" cy="26" r="14" fill="none" stroke="#3a6a9f" stroke-width="2.200" stroke-dasharray="16 6" stroke-dashoffset="-3"/><path d="M26 10v32M10 26h32" stroke="#4a88cc" stroke-width="3"/><use href="#caretb"/></symbol>
<symbol id="gcpa" viewBox="0 0 48 48"><circle cx="19" cy="17" r="12" fill="none" stroke="#777" stroke-width="2" stroke-dasharray="13 6" stroke-dashoffset="-3"/><path d="M19 1v32M3 17h32" stroke="#777" stroke-width="2.500"/><path d="M42 8C20 20 12 30 8 46" fill="none" stroke="#777" stroke-width="2.500" stroke-dasharray="6 3"/><rect x="28" y="29" width="19" height="19" rx="3" fill="#888"/><path d="M37.500 32v13M31 38.500h13" stroke="#fff" stroke-width="3.500"/></symbol>
<symbol id="brush" viewBox="0 0 48 48"><path d="M7 10c-2 22 6 28 22 28" fill="none" stroke="#777" stroke-width="2.500" stroke-dasharray="6 3"/><rect x="4" y="4" width="6" height="7" fill="#ddd" stroke="#777" stroke-width="2"/><path d="M26 19l4-2 5 12-6 4zM27 34l9-5 8 14-17 1z" fill="#a89a88" stroke="#777"/></symbol>
<symbol id="puz" viewBox="0 0 48 48"><path d="M18 10l2 10-3 3H4h13l2 5-7 8 18-1 7 7 1-6h6l-4-8 5-9-1-8h-9l-5 4z" fill="currentColor" stroke="currentColor" stroke-width="7.500" stroke-linejoin="round"/></symbol>
<symbol id="ttg" viewBox="0 0 48 48"><use href="#puz" color="#f59a1a"/><circle cx="32.500" cy="15.500" r="11" fill="#4a0a74"/><circle cx="32.500" cy="15.500" r="11.500" fill="none" stroke="#4a0a74" stroke-width="4" stroke-dasharray="4.500 4.530"/><circle cx="32.500" cy="15.500" r="5.200" fill="#f6e6cc"/></symbol>
<symbol id="ttr" viewBox="0 0 48 48"><use href="#puz" color="#b8aa98"/><path d="M12 24a13 13 0 0 1 24-7M38 24a13 13 0 0 1-24 7" fill="none" stroke="#777790" stroke-width="4.500"/><path d="M39 10v12l-11-4zM11 38V26l11 4z" fill="#777790"/></symbol>
<symbol id="pinm" viewBox="0 0 24 32"><path d="M12 31C9 22 3 18 3 11a9 9 0 0 1 18 0c0 7-6 11-9 20z" fill="#f59a1a"/><circle cx="12" cy="11" r="4" fill="#eee"/></symbol>
<symbol id="pingr" viewBox="0 0 24 32"><path d="M12 31C9 22 3 18 3 11a9 9 0 0 1 18 0c0 7-6 11-9 20z" fill="#a8a8a8"/><circle cx="12" cy="11" r="4" fill="#eee"/></symbol>
<symbol id="ttp" viewBox="0 0 48 48"><use href="#puz" color="#5b0b86"/><use href="#pinm" x="19" y="3" width="28" height="28"/></symbol>
<symbol id="ttf" viewBox="0 0 48 48"><path d="M7 2h36L28 21v25h-5V21z" fill="#5b0b86"/><path d="M38 4L29 17" stroke="#fff" stroke-width="2"/><use href="#pinm" x="11" y="22" width="12" height="11"/><use href="#pinm" x="13" y="31" width="14" height="14"/><use href="#pinm" x="26" y="26" width="12" height="12"/><use href="#pingr" x="1" y="26" width="12" height="11"/><use href="#pingr" x="1" y="35" width="15" height="13"/><use href="#pingr" x="35" y="23" width="12" height="11"/><use href="#pingr" x="28" y="35" width="15" height="13"/></symbol>
<symbol id="ttroute" viewBox="0 0 48 48"><path d="M16 41H5c-4-2-3-10 3-10 5-1 5-4 3-9-2-8 0-14 5-14s4 6 5 13 4 6 5-1 5-6 6 0 0 17 4 17 1-8 4-9 8 1 7-5c-1-4-3-4-5-5" fill="none" stroke="#5b0b86" stroke-width="3.500"/><use href="#pinm" x="6" y="23" width="20" height="19"/><use href="#pinm" x="30" y="1" width="20" height="19"/></symbol>
<symbol id="pincur" viewBox="0 0 48 48"><path d="M22 46C16 32 5 28 5 19a17 17 0 0 1 34 0c0 9-11 13-17 27z" fill="#999"/><circle cx="22" cy="17" r="7" fill="#eee"/><path d="M24 28l3 16 4-4 4 7 3-2-4-7 5-1z" fill="#ddd4bc"/></symbol>
<symbol id="grid" viewBox="0 0 48 48"><path d="M18 4h5M18 13h29M3 21h44M11 28h36M11 35h5M25 35h22M32 43h14" stroke="#8e8e8e" stroke-width="5.500" stroke-dasharray="5.500 1.500"/></symbol>
<symbol id="puzq" viewBox="0 0 48 48"><use href="#puz" color="#929292"/><text x="23" y="43" font-size="36" font-weight="700" font-family="Open Sans" fill="#222">?</text></symbol>
<symbol id="puzw" viewBox="0 0 48 48"><use href="#puz" color="#929292"/><path d="M26 24l10 19" stroke="#222" stroke-width="6" stroke-linecap="round"/><path d="M21 15c-1 9 11 12 12 2" fill="none" stroke="#222" stroke-width="5"/></symbol>
<symbol id="docplus" viewBox="0 0 48 48"><path d="M2 3h30v34H2z" fill="#f2f2f2" stroke="#666" stroke-width="2.500"/><use href="#plus"/></symbol>
<symbol id="funnel" viewBox="0 0 48 48"><path d="M4 2h40v7L28 26v16l-8 5V26L4 9z" fill="#5f8fc4" stroke="#3c6696" stroke-width="2"/><path d="M4 2h40v6H4z" fill="#fbe94c" stroke="#b99d10" stroke-width="1.500"/></symbol>
<symbol id="collapse" viewBox="0 0 48 48"><path d="M4 3h20M4 3v40M4 22h10M4 40h10" stroke="#666" stroke-width="2.500" fill="none"/><path d="M12 17h9v9h-9zM12 35h9v9h-9z" fill="#ffd060" stroke="#e08a10" stroke-width="2.500"/><path d="M34 1l12 14h-7v28h-9V15h-8z" fill="#5f8fc4" stroke="#2d5580" stroke-width="2"/></symbol>
<symbol id="expand" viewBox="0 0 48 48"><path d="M4 3h20M4 3v40M4 22h10M4 40h10" stroke="#666" stroke-width="2.500" fill="none"/><path d="M12 17h9v9h-9zM12 35h9v9h-9z" fill="#ffd060" stroke="#e08a10" stroke-width="2.500"/><path d="M34 46l12-14h-7V3h-9v29h-8z" fill="#5f8fc4" stroke="#2d5580" stroke-width="2"/></symbol>
<symbol id="star" viewBox="0 0 48 48"><path d="M24 2l6 16h17L34 28l5 17-15-10L9 45l5-17L1 18h17z" fill="#fbf15c" stroke="#b59a10" stroke-width="2"/></symbol>
<symbol id="phome" viewBox="0 0 48 48"><path d="M4 6h16l4 5h20v34H4z" fill="#a5d04a" stroke="#777" stroke-width="3"/><path d="M5 22l38 22M18 8l-8 34" stroke="#f4f4e0" stroke-width="3"/><path d="M31 31l-9-9 7-10h8l5 10z" fill="#18841c"/></symbol>
<symbol id="home" viewBox="0 0 48 48"><path d="M4 5h16l4 5h20v34H4z" fill="#eee" stroke="#777" stroke-width="3"/><path d="M14 25l10-11 10 11h-3v12H17V25z" fill="none" stroke="#333" stroke-width="3"/></symbol>
<symbol id="folder" viewBox="0 0 48 48"><path d="M4 5h16l4 5h20v34H4z" fill="#eee" stroke="#777" stroke-width="3"/></symbol>
<symbol id="pg" viewBox="0 0 48 48"><path d="M12 3c10-3 22-2 30 1 6 4 2 20-4 26l6 1-8 4c-2 4-1 11-8 11-6-1-5-8-7-13-6 2-10-2-13-8C3 16 1 6 12 3z" fill="#5a83b4" stroke="#2d4a6c" stroke-width="2.500"/><path d="M16 6c-2 10 0 14 4 18v10M30 5c-4 8 2 12 0 20l-4 4" stroke="#2d4a6c" stroke-width="2" fill="none"/></symbol>
<symbol id="hana" viewBox="0 0 48 48"><rect x="10" y="8" width="29" height="32" fill="#5f8fc4"/><path d="M10 3h29M10 45h29M3 8v33M45 8v33" stroke="#335f90" stroke-width="5" stroke-dasharray="3.500 3.500"/></symbol>
<symbol id="mssql" viewBox="0 0 48 48"><path d="M3 3c16-3 34 6 42 20v5L6 42c8-12 6-28-3-39z" fill="#5a83b4" stroke="#2d4a6c" stroke-width="2.500"/><path d="M17 4c8 12 8 20 0 34M31 9c4 10 4 16 0 24" stroke="#2d4a6c" stroke-width="2.500" fill="none"/></symbol>
<symbol id="paint" viewBox="0 0 48 48"><path d="M10 5l20 4-3 11-22-4z" fill="#f8dc4a"/><path d="M6 15l20 4-4 10-20-4z" fill="#5a8fd0"/><path d="M2 24l22 4 2 15L0 34z" fill="#e03a30"/><path d="M46 4L33 20" stroke="#c07818" stroke-width="5" stroke-linecap="round"/><path d="M25 15l13 9-9 21-17-12z" fill="#e2a860" stroke="#a86a20" stroke-width="1.500"/><path d="M27 20l-9 16M32 23l-9 17" stroke="#b87c30" stroke-width="1.500"/></symbol>
<symbol id="grp" viewBox="0 0 48 48"><path d="M8 14v32h24M14 10h22v30H14zM22 5h8M26 1v28" fill="none" stroke="#666" stroke-width="3"/><rect x="20" y="5" width="22" height="28" fill="none" stroke="#666" stroke-width="2.500"/><use href="#plus"/></symbol>
<symbol id="eye" viewBox="0 0 48 48"><path d="M1 26c12-16 34-16 44 0-12 12-32 12-44 0z" fill="#f2f2f2" stroke="#555" stroke-width="2"/><circle cx="24" cy="24" r="10" fill="#6f9fd6" stroke="#24415f" stroke-width="2"/><circle cx="24" cy="24" r="4.500" fill="#111"/><path d="M3 17C14 6 32 6 42 15" fill="none" stroke="#888" stroke-width="2"/><use href="#caretb"/></symbol>
<symbol id="funnelc" viewBox="0 0 48 48"><use href="#funnel"/><use href="#caretb"/></symbol>
<symbol id="eps" viewBox="0 0 48 48"><text x="1" y="31" font-size="56" font-family="Liberation Serif" fill="#7a3a8a">ε</text><path d="M25 24h22v23h-7V32h-7v15h-8z" fill="#ccc" stroke="#999" stroke-width="2"/></symbol>
<symbol id="docminus" viewBox="0 0 48 48"><path d="M4 2h36v38H4z" fill="#f2f2f2" stroke="#666" stroke-width="2.500"/><rect x="28" y="30" width="19" height="17" rx="4" fill="#d84a4a"/><path d="M32 38.500h11" stroke="#fff" stroke-width="4"/></symbol>
<symbol id="gears" viewBox="0 0 48 48"><g fill="none"><circle cx="15" cy="15" r="8" stroke="#c81414" stroke-width="8"/><circle cx="15" cy="15" r="13" stroke="#c81414" stroke-width="3" stroke-dasharray="4.500 4"/><circle cx="37" cy="25" r="6" stroke="#6a6a6a" stroke-width="5"/><circle cx="37" cy="25" r="10" stroke="#6a6a6a" stroke-width="3" stroke-dasharray="4 3"/><circle cx="23" cy="39" r="4" stroke="#7fa4dc" stroke-width="4"/><circle cx="23" cy="39" r="7" stroke="#7fa4dc" stroke-width="3" stroke-dasharray="3 2"/></g><path d="M28 33h18l-9 10z" fill="#444"/></symbol>
<symbol id="pyc" viewBox="0 0 48 48"><use href="#pyb" width="44" height="46"/><path d="M28 33h18l-9 11z" fill="#444"/></symbol>
<symbol id="doc" viewBox="0 0 48 48"><path d="M9 3h22l9 10v32H9z" fill="#f4f4f4" stroke="#777" stroke-width="2"/><path d="M31 3v10h9" fill="none" stroke="#777" stroke-width="2"/><path d="M13 16h12M13 24h23M13 31h23M13 38h17" stroke="#555" stroke-width="2.500"/></symbol>
<symbol id="ednote" viewBox="0 0 48 48"><rect x="2" y="4" width="27" height="27" fill="#fbe94c" stroke="#c8a400" stroke-width="2"/><path d="M22 45l3-13 12-20 8 5-12 20z" fill="#e6cf12" stroke="#777" stroke-width="2"/><path d="M22 45l3-12 8 5z" fill="#777"/></symbol>
<symbol id="cage" viewBox="0 0 48 48"><path d="M5 47V20C6 6 16 3 24 3s17 3 19 13M13 47V20c0-9 4-15 10-17M21 47V20c0-8 0-13 2-17M24 3c4 3 5 6 6 13M24 3c7 2 10 7 11 13M30 47v-7M37 47v-7M44 47v-7" fill="none" stroke="#1d9a6c" stroke-width="2.800"/></symbol>
<symbol id="mag" viewBox="0 0 24 24"><circle cx="9.500" cy="9.500" r="8" fill="none" stroke="#888" stroke-width="1.900"/><path d="M15 15l7.500 7.500" stroke="#888" stroke-width="2.400"/></symbol>
<symbol id="srcw" viewBox="0 0 48 48"><circle cx="29" cy="30" r="12" fill="#6f9fd6" stroke="#e4e4e4" stroke-width="5"/><circle cx="29" cy="30" r="15.500" fill="none" stroke="#e4e4e4" stroke-width="4" stroke-dasharray="6 6.170"/><use href="#wr"/></symbol>
<symbol id="masks" viewBox="0 0 48 48"><path d="M10 37c-12 2-13-14-6-17 0-8 8-9 12-7 3-7 14-6 15-1 8-4 15 2 14 8 6 6 3 18-8 17-8 3-18 2-27 0z" fill="#eef0ff"/><text x="4" y="31" font-size="22" font-weight="700" font-family="Open Sans" textLength="40" fill="#333">abc</text></symbol>
<symbol id="cube" viewBox="0 0 48 48"><path d="M24 1l20 15-20 14L4 16z" fill="#f88a8a" stroke="#c01414" stroke-width="2.500"/><path d="M3 18l20 14v15L3 35z" fill="#9ee83a" stroke="#5a9a10" stroke-width="2"/><path d="M45 18L25 32v15l20-12z" fill="#fbe94c" stroke="#c89a00" stroke-width="2"/></symbol>
<symbol id="fields" viewBox="0 0 48 48"><use href="#table"/><rect x="12" y="2" width="12" height="44" fill="#f0e8b4" stroke="#fbf24a" stroke-width="3"/></symbol>
<symbol id="aform" viewBox="0 0 48 48"><rect x="3" y="3" width="42" height="42" fill="#dfe7f1" stroke="#8aa6c8" stroke-width="2"/><path d="M21 10h17v11H21zM21 27h17v11H21z" fill="#fff" stroke="#5f8fc4" stroke-width="2.500"/><path d="M9 16h8M9 33h8" stroke="#3f5f80" stroke-width="4"/></symbol>
<symbol id="joins" viewBox="0 0 48 48"><circle cx="5" cy="24" r="4.500" fill="#6f9fd6"/><path d="M46 4v40L14 24z" fill="#5a8cc6"/></symbol>
<symbol id="aux" viewBox="0 0 48 48"><path d="M16 2h20l10 10v34H16z" fill="#fff" stroke="#ccc"/><path d="M36 2v10h10z" fill="#555"/><path d="M1 20v20c0 9 30 9 30 0V20z" fill="#9a9a9a" stroke="#555" stroke-width="1.500"/><ellipse cx="16" cy="20" rx="15" ry="6" fill="#ddd" stroke="#555" stroke-width="1.500"/><path d="M1 31c0 8 30 8 30 0" fill="none" stroke="#444" stroke-width="1.500"/></symbol>
<symbol id="okc" viewBox="0 0 32 32"><circle cx="16" cy="16" r="16" fill="#16871e"/><path d="M9 16l5 6 9-12" fill="none" stroke="#fff" stroke-width="3.200"/></symbol>
<symbol id="noc" viewBox="0 0 32 32"><circle cx="16" cy="16" r="16" fill="#c8142c"/><path d="M11 11l10 10M21 11L11 21" stroke="#fff" stroke-width="3.500"/></symbol>
<symbol id="helpc" viewBox="0 0 32 32"><circle cx="16" cy="16" r="15" fill="url(#gHelp)" stroke="#1c5fa8" stroke-width="1.200"/><text x="10.500" y="24.500" font-size="24" font-family="Open Sans" fill="#fff">?</text></symbol>
</svg>

<div class="window">
  <header class="titlebar">
    <span class="title">*geocode — QGIS</span>
    <div class="winbtns"><i><svg viewBox="0 0 44 44"><path d="M14 27h16" stroke="#3d3d3d" stroke-width="2.500"/></svg></i><i><svg viewBox="0 0 44 44"><path d="M15 19h10v11H15z" fill="none" stroke="#3d3d3d" stroke-width="2.200"/><path d="M18 15.500h11v11" fill="none" stroke="#888" stroke-width="2.200"/></svg></i><i><svg viewBox="0 0 44 44"><path d="M14.500 15l15 15M29.500 15l-15 15" stroke="#3d3d3d" stroke-width="2.400"/></svg></i></div>
  </header>
  <nav class="menubar"><span>Pro<u>j</u>ect</span><span><u>E</u>dit</span><span><u>V</u>iew</span><span><u>L</u>ayer</span><span><u>S</u>ettings</span><span><u>P</u>lugins</span><span>Vect<u>o</u>r</span><span><u>R</u>aster</span><span><u>D</u>atabase</span><span><u>W</u>eb</span><span><u>M</u>esh</span><span>Pro<u>c</u>essing</span><span><u>H</u>elp</span></nav>
  <div class="toolbar">
    <svg><use href="#new"/></svg><svg><use href="#open"/></svg><svg><use href="#save"/></svg><svg><use href="#nlayout"/></svg><svg><use href="#mlayout"/></svg><svg><use href="#styles"/></svg>
    <i class="handle"></i>
    <svg><use href="#hand"/></svg><svg class="off"><use href="#pan"/></svg><svg><use href="#zin"/></svg><svg class="on"><use href="#zout"/></svg><svg><use href="#zfull"/></svg><svg class="off"><use href="#zsel"/></svg><svg><use href="#zlay"/></svg><svg class="off"><use href="#zone"/></svg><svg><use href="#zlast"/></svg><svg class="off"><use href="#znext"/></svg><svg><use href="#nmap"/></svg><svg><use href="#n3d"/></svg><svg><use href="#nbm"/></svg><svg><use href="#bm"/></svg><svg><use href="#clock"/></svg><svg><use href="#refresh"/></svg>
    <i class="handle"></i>
    <svg><use href="#select"/></svg><b></b><svg><use href="#selform"/></svg><b></b><svg><use href="#desel"/></svg><b></b><svg><use href="#selloc"/></svg><b></b>
    <i class="handle"></i>
    <svg><use href="#identify"/></svg><svg><use href="#abacus"/></svg><svg class="on"><use href="#gear"/></svg><svg><use href="#sigma"/></svg><svg><use href="#tbl"/></svg><b></b><svg><use href="#ruler"/></svg><b></b><svg><use href="#tip"/></svg><svg class="off"><use href="#rungear"/></svg><b class="off"></b>
  </div>
  <div class="toolbar">
    <svg><use href="#dsrc"/></svg><svg><use href="#ngpkg"/></svg><svg><use href="#nshp"/></svg><svg><use href="#nspl"/></svg><svg><use href="#chip"/></svg><svg><use href="#nmesh"/></svg><svg><use href="#nvirt"/></svg>
    <i class="handle"></i>
    <svg class="off"><use href="#pens"/></svg><svg><use href="#pen"/></svg><svg class="off"><use href="#savep"/></svg><svg class="off"><use href="#digl"/></svg><b class="off"></b><svg class="off"><use href="#pts"/></svg><svg class="off"><use href="#vert"/></svg><b class="off"></b><svg class="off"><use href="#form"/></svg><svg class="off"><use href="#trash"/></svg><svg class="off"><use href="#cut"/></svg><svg class="off"><use href="#copy"/></svg><svg class="off"><use href="#paste"/></svg><svg class="off"><use href="#undo"/></svg><svg class="off"><use href="#redo"/></svg>
    <i class="handle"></i>
    <svg class="nudge"><use href="#abc"/></svg><svg><use href="#diag"/></svg><i class="sep"></i><svg class="nudge"><use href="#abpin"/></svg><svg class="nudge"><use href="#abred"/></svg><i class="sep"></i><svg class="off nudge"><use href="#abpinoff"/></svg><svg class="off nudge"><use href="#abeye"/></svg><svg class="off nudge"><use href="#abmv"/></svg><svg class="off nudge"><use href="#abrot"/></svg><svg class="off nudge"><use href="#abed"/></svg>
    <i class="handle"></i>
    <svg><use href="#globea"/></svg><svg><use href="#globeb"/></svg><svg><use href="#globec"/></svg>
    <i class="handle"></i>
    <svg><use href="#py"/></svg><svg><use href="#reload"/></svg><b></b><svg><use href="#hammer"/></svg>
    <i class="handle"></i>
    <svg><use href="#book"/></svg>
    <i class="handle"></i>
  </div>
  <div class="toolbar last">
    <svg><use href="#mover"/></svg><svg class="off"><use href="#cross"/></svg><i class="sep"></i><svg><use href="#gcp"/></svg><svg class="off"><use href="#gcpa"/></svg><svg><use href="#pts"/></svg><svg class="off"><use href="#brush"/></svg><i class="sep"></i><svg><use href="#info"/></svg><svg><use href="#wr"/></svg>
    <i class="handle"></i>
    <div class="tt"><svg viewBox="0 0 48 48"><path d="M20 4c-6-2-7 3-6 8s-1 6-8 5-7 7 0 7 9 2 6 7-3 10 4 9 10-2 13 2 7 6 8 1 2-4 6-5-1-8 0-11M20 4c3 1 2 6 5 6" fill="none" stroke="#4a5058" stroke-width="3" stroke-linejoin="round" stroke-linecap="round"/><path d="M34 32c-3-7-10-9-10-17a10 10 0 0 1 20 0c0 8-7 10-10 17z" fill="#eee" stroke="#4a5058" stroke-width="2.800"/><circle cx="34" cy="14" r="3.500" fill="none" stroke="#4a5058" stroke-width="2"/></svg><div><strong>TravelTime</strong><em>platform</em></div></div>
    <i class="sep"></i><svg><use href="#ttg"/></svg><svg class="off"><use href="#ttr"/></svg><i class="sep"></i><svg><use href="#ttp"/></svg><b></b><svg><use href="#ttf"/></svg><b></b><svg><use href="#ttroute"/></svg><b></b><i class="sep"></i>
    <div class="field">Enter an…</div><svg><use href="#pincur"/></svg><i class="sep"></i><svg><use href="#grid"/></svg><svg><use href="#puzq"/></svg><svg><use href="#puzw"/></svg>
  </div>

  <main class="work">
    <section class="left">
      <div class="dockhead"><span>Browser</span><svg class="dockbtns" viewBox="0 0 28 12"><g fill="none" stroke="#555"><rect x=".5" y=".5" width="10" height="11" rx="2"/><path d="M3 5h3v4H3zM5 3h3v4"/><rect x="16.500" y=".5" width="10" height="11" rx="2"/><path d="M19 3l5 6M24 3l-5 6" stroke-width="1.600"/></g></svg></div>
      <div class="dockbar"><svg><use href="#docplus"/></svg><svg><use href="#refresh"/></svg><svg><use href="#funnel"/></svg><svg><use href="#collapse"/></svg><svg><use href="#info"/></svg></div>
      <div class="browser">
        <ul>
          <li><svg><use href="#star"/></svg>Favorites</li><li><svg><use href="#bm"/></svg>Spatial Bookmarks</li><li><svg><use href="#phome"/></svg>Project Home</li><li><svg><use href="#home"/></svg>Home</li><li><svg><use href="#folder"/></svg>/</li><li><svg><use href="#gpkg"/></svg>GeoPackage</li><li><svg><use href="#feather"/></svg>SpatiaLite</li><li><svg><use href="#pg"/></svg>PostgreSQL</li><li><svg><use href="#hana"/></svg>SAP HANA</li><li><svg><use href="#mssql"/></svg>MS SQL Server</li>
        </ul>
        <div class="vbar"><i class="up"></i></div>
      </div>
      <div class="splitdots"></div>
      <div class="dockhead layershead"><span>Layers</span></div>
      <div class="dockbar layersbar"><svg><use href="#paint"/></svg><svg><use href="#grp"/></svg><svg><use href="#eye"/></svg><svg><use href="#funnelc"/></svg><svg><use href="#eps"/></svg><b></b><svg><use href="#expand"/></svg><svg><use href="#collapse"/></svg><svg><use href="#docminus"/></svg></div>
      <div class="layers">
        <div class="lay sel"><span class="tri"></span><span class="chk"><svg viewBox="0 0 26 26"><path d="M6 14l5 7L20 5" fill="none" stroke="#000" stroke-width="3"/></svg></span><span class="dot"></span><span class="lname">portuguese_poi_transform — portuguesepoi_small__po</span></div>
        <div class="lay"><span class="tri show"></span><span class="chk"><svg viewBox="0 0 26 26"><path d="M6 14l5 7L20 5" fill="none" stroke="#000" stroke-width="3"/></svg></span><svg class="osm" viewBox="0 0 26 26"><path fill="#9db4cf" d="M0 0h26v26H0z"/><path fill="#24384c" d="M0 0h8v8H0zM18 0h8v8h-8zM9 9h8v8H9zM0 18h8v8H0z"/><path fill="#dde6ee" d="M0 9h8v8H0zM9 18h8v8H9zM18 9h8v8h-8z"/><path fill="#4a6a90" d="M9 0h8v8H9z"/></svg><span class="lname osmname">OSM Standard</span></div>
      </div>
      <div class="hbar"><i class="lbtn"></i><i class="thumb"></i><i class="trough"></i><i class="rbtn"></i></div>
    </section>

    <section class="map">
      <svg viewBox="931 304 1162 1385" width="1162" height="1385">
        <g transform="translate(1840 620) scale(.33333)">
          <path class="land" d="M765 165L700 166 640 163 590 163 575 145 545 135 520 142 495 136 470 150 440 158 440 170 400 188 350 200 310 212 285 240 300 262 320 300 318 318 345 322 340 345 360 358 345 385 347 430 360 490 382 550 370 610 355 680 335 745 310 790 288 830 272 875 290 890 325 905 355 940 360 1000 350 1015 358 1040 345 1110 332 1155 375 1140 410 1140 450 1152 500 1160 530 1140 570 1130 640 1135 690 1160 720 1190 740 1240 765 1262z"/>
          <g class="green"><path d="M450 160l60-20 50 15 10 30-50 10-60-5z"/><path d="M620 170l140 5v90l-60 5-50-50z"/><path d="M630 300l70 20 60-30v60l-100 10z"/><path d="M355 540l25 10-10 60-30 120-20 20 20-90z"/><path d="M400 550l60-20 20 60-40 60-40-30z"/><path d="M500 630l80-20-10 40-90 40z"/><path d="M345 210l30 5-20 40-30-10z"/><path d="M480 580l50-10 20 40-60 10z"/><path d="M365 1100l60-10 60 20-40 25-70-10z"/><path d="M570 1010l60-20 80 10 30 20-100 10z"/><path d="M640 580l40-20 60 10-30 20z"/></g>
          <path class="road" d="M420 190l10 60-30 60-25 70 5 100 5 80 10 60-10 60-40 90-20 60 30 90 50 25 40 60 30 60-5 120M420 200l100-15 60-20M400 265l80 5 80-25 80 60 120 10M375 480l80 20 110-30 130-40M385 600l120 5 150 10 100-30M390 530l60-20 70-40 10-60M380 915h170l80-35 80-60M400 745l60 30 80-20 40-90 15-60M560 1140l-160-2M690 1010l30 20-10 100M540 420l100-30 120 10M690 700l60 10M350 1010l60-30 40 60"/>
          <path class="edge" d="M765 125L700 130 640 128 580 108 520 95 480 100 420 130 300 180 245 220 238 250 260 310 300 380 303 430 318 480 320 600 300 660 200 770 212 910 300 1020 287 1150 290 1185 330 1203 500 1195 570 1165 640 1165 700 1250 740 1290"/>
          <path class="bord" d="M303 420l42 0 25-22 60-12 32 4-14 28 30 15 50-12 40 10 40-28 90 6 0 30 50 20-20 40-50 30-33 21 15 50-10 90-20 62-80 8 50 62 35 40-35 40-20 40 20 35 35 10-35 45-40 40-8 40 18 55"/>
          <path class="reg" d="M610 180l5 60 40 25-30 50 30 30-20 45M650 670l60-40 50-20M635 985l60 5 60 30"/>
        </g>
        <g transform="translate(1440 1050) scale(.4273 .4075)">
          <path class="land" d="M1540 110L1522 160 1500 220 1450 268 1380 312 1330 342 1250 358 1238 378 1200 420 1162 450 1150 490 1120 540 1100 575 1092 620 1085 680 1115 710 1118 740 1100 790 1060 840 1010 880 920 940 880 980 800 1005 735 1020 710 1050 680 1100 650 1180 600 1200 540 1240 515 1300 500 1360 492 1430 440 1480 395 1525 385 1575H1540z"/>
          <g class="land"><path d="M125 912l22-4 8 12-10 34-14-20zM108 1048l24-14-5 24zM200 1000l12-12 16 10-12 12zM255 970l35-8 50-22 5 10-35 30-8 25-20 8zM382 1020l18-26 30 6 2 30-25 14-22-10zM545 1005l30-15 20-60 20-8-8 50-40 30zM616 900l40-45 8 12-18 32-28 10z"/></g>
          <g class="green"><path d="M1440 230l90-40v80l-70 0z"/><path d="M1300 410l60-20 60 50-40 20-60-10z"/><path d="M1100 570l30-30 20 40-20 50-30 0z"/><path d="M1095 620l70 10 30 40-50 20-50-20z"/><path d="M1240 630l60-20 60-20 10 10-70 30z"/><path d="M1270 400l50-50 60 20-30 40z"/><path d="M1400 570l60-20 50 0-40 20z"/><path d="M1330 1045l50-10 40-12-30 25z"/><path d="M848 1482l40 20 26 22-30-5z"/><path d="M265 975l50-10-20 30zM390 1010l25 0-10 25zM130 915l18 0-6 30z"/></g>
          <g class="sand"><path d="M1180 430l40-40 0 20-30 40zM735 1120l40-80 25-10-50 100zM636 1335l14-100 10-60 4 10-10 80zM1500 770l25 0 0 20z"/></g>
          <path class="road" d="M1520 160l-30 60-50 40-100 60-100 60 0 40-40 20-15 60M1340 345l-30 80-10 90-80 60-40 60-55 70M1100 575l130-5M1120 720l90-10M1125 720l-15 90M1380 330l60 60 90 10M720 1025l-5 60-25 35M735 1020h65l25-15"/>
          <path class="edge" d="M1508 0l20 20M1528 50l-18 70-50 80-20 50-40 15-170 70-40 45-60 55-5 45-35 50-25 50-7 110 32 25-10 45-40 70-55 40-65 40-40 45-60 20-100 20-60 65-35 95-65 40-45 45-15 50-25 40-3 80-32 40-80 70-25 55"/>
          <g class="edge"><path d="M328 760c4-24 20-40 45-40 24 0 38 14 33 32-7 24-30 38-55 36-16 0-26-12-23-28z"/><path d="M96 920c0-22 20-38 44-38 28 0 44 20 44 44-4 32-22 58-46 58s-42-28-42-64z"/><path d="M78 1045c0-22 24-36 52-36 22 0 36 16 34 38-4 20-20 38-44 38-26 0-42-16-42-40z"/><path d="M174 998c0-22 20-38 40-38 34-10 60-40 120-42 26-2 40 14 44 38-10 20-40 30-50 50-20 34-60 40-82 18-40 18-72 4-72-26z"/><path d="M354 1020c0-36 26-50 56-50 34 0 54 18 54 52-4 36-26 50-54 50-36-2-56-22-56-52z"/><path d="M512 1010c4-20 30-40 40-76 20-40 50-90 66-130 8-24 30-30 50-26 20 4 12 30 18 48 8 20 22 26 18 44-16 34-44 60-56 90-10 40-40 60-66 72-30 6-68 4-70-22z"/></g>
          <path class="bord" d="M1530 818l-120 7-70 35-110 70v333H820M835 1263v312M1230 1100l298 187M955 1150l55 5 80 17 40-30 92-4-6-30v-52h12M835 1290l-10 60-45 50-60 70-5 40-75 20-25 45M1530 1388h-50l17 180"/>
          <path class="reg" d="M862 992l28 43 70 10 110 5 70 35 80 35M1165 830l10 70 50 70M492 1435l48 25 100-10 80 5 110 10M1480 1485l-120 80M1100 830l70 5 20 35M1230 650l80 5 30-30 60-20 60-20 70 10M1345 650l20 60 30 40 60-10 50 30v60M1160 450l90 20 70-10 90 20-5 90M1440 300l-10 60 15 80-15 60"/>
        </g>
        <path class="edge" d="M2093 337c-14-2-27 2-27 12 0 8 14 14 27 11"/>
        <g class="lab">
          <text x="1955" y="681" textLength="49">A Coruña</text><text x="2009" y="699" textLength="26">Lugo</text><text x="1922" y="708" textLength="45">Santiago</text><text x="1888" y="718" textLength="79">de Compostela</text><text x="1951" y="738" textLength="23">Vigo</text><text x="1984" y="746" textLength="44">Ourense</text><text x="1962" y="773" textLength="34">Braga</text><text x="1954" y="794" textLength="29">Porto</text><text x="1955" y="842" textLength="45">Coimbra</text><text x="1926" y="915" textLength="36">Lisboa</text><text x="2031" y="924" textLength="41">Badajoz</text><text x="2062" y="879" textLength="36">Cáceres</text><text x="2035" y="991" textLength="35">Huelva</text><text x="2082" y="984" class="m">Sevilla</text><text x="2073" y="1009">Jerez de</text><text x="2065" y="1020">la Frontera</text><text x="2088" y="914">Mérida</text>
          <text x="2047" y="1084" textLength="42">Larache</text><text x="2047" y="1101" textLength="42">ⵍⵄⵔⴰⵢⵛ</text><text x="2053" y="1113" textLength="36">العرائش</text>
          <text x="2021" y="1139" class="m" textLength="80">Rabat ⵔⴱⴰⵟ</text><text x="2043" y="1153" class="m" textLength="31">الرباط</text>
          <text x="1837" y="1251" class="m" textLength="95">Safi ⴰⵙⴼⵉ آسفي</text>
          <text x="1855" y="1278" textLength="51">Essaouira</text><text x="1860" y="1289" textLength="46">ⵚⵚⵡⵉⵕⴰ</text><text x="1872" y="1301" textLength="34">الصويرة</text>
          <text x="1872" y="1321" class="m" textLength="94">Agadir ⴰⴳⴰⴷⵉⵔ</text><text x="1905" y="1336" class="m" textLength="29">أگادير</text>
          <text x="1869" y="1367" textLength="40">Sidi Ifni</text><text x="1862" y="1379" textLength="55">ⵙⵉⴷⵉ ⵉⴼⵏⵉ</text><text x="1864" y="1391" textLength="50">سيدي إفني</text>
          <text x="2025" y="1327" textLength="59">Ouarzazate</text><text x="2028" y="1339" textLength="54">ⵡⴰⵔⵣⴰⵣⴰⵜ</text><text x="2038" y="1351" textLength="34">ورزازات</text>
          <text x="1588" y="1437" class="m" textLength="70">Las Palmas</text><text x="1572" y="1453" class="m" textLength="101">de Gran Canaria</text>
          <text x="1711" y="1518" textLength="50">Laâyoune</text><text x="1707" y="1531" textLength="58">ⵍⵄⵢⵓⵏ العيون</text><text x="1579" y="1692" textLength="36">Dakhla</text>
        </g>
        <g class="lab ctry"><text x="1942" y="888" class="l" textLength="57">Portugal</text><text x="1869" y="1420" class="m" textLength="51">Maroc /</text><text x="1862" y="1435" class="m" textLength="65">ⵍⵎⵖⵔⵉⴱ /</text><text x="1873" y="1450" class="m" textLength="42">المغرب</text><text x="1913" y="1653" textLength="46">تيرس زمور</text><text x="1712" y="1690" class="m" textLength="55">الجمهورية</text></g>
        <g class="lab prov">
          <text x="1988" y="716" textLength="34" class="it">Galicia</text><text x="2086" y="686" class="it">Asturias</text><text x="2070" y="897" class="it">Extremadura</text>
          <text x="1980" y="1188" textLength="60" class="it">Casablanca-</text><text x="1978" y="1199" textLength="64">Settat ⵜⵉⴳⵎⵉ</text><text x="1988" y="1210" textLength="44">ⵜⵓⵎⵍⵉⵍⵜ-</text><text x="1982" y="1222" textLength="55">ⵙⵟⵟⴰⵜ الدار</text><text x="1977" y="1233" textLength="66">البيضاء-سطات</text>
          <text x="1956" y="1257" textLength="55" class="it">Marrakech-</text><text x="1949" y="1268" textLength="69">Safi ⵎⵕⵕⴰⴽⵛ-</text><text x="1951" y="1280" textLength="65">ⴰⵙⴼⵉ مراكش-</text><text x="1971" y="1291" textLength="27">آسفي</text>
          <text x="2058" y="1215" class="it">Béni Mellal-</text><text x="2066" y="1227" class="it">Khénifra</text><text x="2059" y="1238">ⴰⵢⵜ ⵎⵍⵍⴰⵍ</text><text x="2068" y="1249">ⵅⵏⵉⴼⵕⴰ</text><text x="2068" y="1261">ملال-</text><text x="2072" y="1273">خنيفرة</text>
          <text x="1960" y="1367" textLength="63" class="it">Souss-Massa</text><text x="1958" y="1379" textLength="68">ⵙⵓⵙⵙ-ⵎⴰⵙⵙⴰ</text><text x="1965" y="1391" textLength="54">سوس-ماسة</text>
          <text x="1798" y="1524" textLength="51" class="it">Laâyoune-</text><text x="1804" y="1536" textLength="39" class="it">Sakia El</text><text x="1789" y="1548" textLength="68">Hamra ⵍⵄⵢⵓⵏ-</text><text x="1787" y="1560" textLength="73">ⵙⴰⵇⵢⴰ ⵍⵃⴰⵎⵔⴰ</text><text x="1791" y="1572" textLength="64">العيون الساقية</text><text x="1808" y="1584" textLength="31">الحمراء</text>
          <text x="2069" y="1478" class="it">Tindouf</text><text x="2069" y="1489">ⵜⵉⵏⴷⵓⴼ</text><text x="2073" y="1502">تندوف</text>
        </g>
        <g class="poi"><circle cx="1979" cy="776" r="7.500"/><circle cx="1988" cy="771" r="7.500"/><circle cx="2024" cy="769" r="7.500"/><circle cx="2065" cy="793" r="7.500"/><circle cx="1968" cy="796" r="7.500"/><circle cx="1966" cy="794" r="7.500"/><circle cx="1995" cy="810" r="7.500"/><circle cx="2009" cy="807" r="7.500"/><circle cx="2003" cy="822" r="7.500"/><circle cx="1977" cy="845" r="7.500"/><circle cx="1984" cy="850" r="7.500"/><circle cx="1980" cy="847" r="7.500"/><circle cx="2017" cy="845" r="7.500"/><circle cx="1972" cy="882" r="7.500"/><circle cx="1978" cy="875" r="7.500"/><circle cx="1997" cy="893" r="7.500"/><circle cx="1928" cy="887" r="7.500"/><circle cx="1927" cy="907" r="7.500"/><circle cx="1934" cy="901" r="7.500"/><circle cx="1948" cy="908" r="7.500"/><circle cx="1930" cy="921" r="7.500"/><circle cx="1939" cy="916" r="7.500"/><circle cx="1941" cy="920" r="7.500"/><circle cx="1943" cy="934" r="7.500"/><circle cx="1941" cy="933" r="7.500"/><circle cx="2041" cy="912" r="7.500"/><circle cx="1965" cy="1000" r="7.500"/><circle cx="1964" cy="1001" r="7.500"/></g>
      </svg>
    </section>

    <section class="right">
      <div class="dockhead"><span>Processing Toolbox</span><svg class="dockbtns r" viewBox="0 0 12 12"><g fill="none" stroke="#555"><rect x=".5" y=".5" width="11" height="11" rx="2"/><path d="M3 5h5v4H3zM5 3h5"/></g></svg></div>
      <div class="dockbar rbar"><svg><use href="#gears"/></svg><svg><use href="#pyc"/></svg><svg><use href="#clk"/></svg><svg><use href="#doc"/></svg><i></i><svg><use href="#ednote"/></svg><i></i><svg><use href="#wr"/></svg></div>
      <div class="search"><svg class="mag"><use href="#mag"/></svg><span>opencage</span><svg class="clr" viewBox="0 0 30 20"><path d="M0 10L8 0h22v20H8z" fill="#777"/><path d="M11 5l8 10M19 5l-8 10" stroke="#fff" stroke-width="2"/></svg></div>
      <ul class="ptree">
        <li><i class="exp c"></i><svg><use href="#clk"/></svg><span>Recently used</span></li>
        <li><i class="exp o"></i><svg class="cg"><use href="#cage"/></svg><span>OpenCage</span></li>
        <li class="ch"><svg><use href="#gear"/></svg><span>Geocode addresses</span></li>
        <li class="ch sel"><svg><use href="#gear"/></svg><span>Geocode coordinates</span></li>
      </ul>
    </section>
  </main>
</div>
<div class="backdrop"></div>

<div class="dialog">
  <header class="dtitle"><span>Layer Properties — portuguese_poi_transform — …</span><i><svg viewBox="0 0 44 44"><path d="M14.500 14.500l15 15M29.500 14.500l-15 15" stroke="#333" stroke-width="2.200"/></svg></i></header>
  <div class="dbody">
    <aside class="side">
      <div class="sfind"><svg><use href="#mag"/></svg></div>
      <div class="slist">
        <ul>
          <li class="cur"><svg><use href="#info"/></svg><span>Information</span></li><li><svg><use href="#srcw"/></svg><span>Source</span></li><li><svg><use href="#paint"/></svg><span>Symbology</span></li><li><svg viewBox="0 -4.500 48 48"><use href="#abc" width="48" height="48"/></svg><span>Labels</span></li><li><svg><use href="#masks"/></svg><span>Masks</span></li><li class="two"><svg><use href="#cube"/></svg><span>3D<br>View</span></li><li><svg><use href="#diag"/></svg><span>Diagrams</span></li><li><svg><use href="#fields"/></svg><span>Fields</span></li><li class="two"><svg><use href="#aform"/></svg><span>Attributes<br>Form</span></li><li><svg><use href="#joins"/></svg><span>Joins</span></li><li class="two"><svg><use href="#aux"/></svg><span>Auxiliary<br>Storage</span></li>
        </ul>
        <div class="dv"><i class="a up"></i><i class="th"></i><i class="tr"></i><i class="a dn"></i></div>
      </div>
    </aside>
    <div class="pane">
      <div class="frame">
        <article>
          <h1>Coordinate Reference System (CRS)</h1>
          <dl>
            <dt>Name</dt><dd>EPSG:3857 - WGS 84 /<br>Pseudo-Mercator</dd>
            <dt>Units</dt><dd>meters</dd>
            <dt>Method</dt><dd>Mercator</dd>
            <dt>Celestial body</dt><dd>Earth</dd>
            <dt>Accuracy</dt><dd>Based on <em>World Geodetic<br>System 1984 ensemble</em><br>(EPSG:6326), which has a<br>limited accuracy of <strong>at best 2<br>meters</strong>.</dd>
            <dt>Reference</dt><dd>Dynamic (relies on a datum<br>which is not plate-fixed)</dd>
          </dl>
        </article>
        <div class="dv fv"><i class="a up"></i><i class="tr t1"></i><i class="th"></i><i class="tr"></i><i class="a dn"></i></div>
        <div class="dh"><i class="a lf"></i><i class="th"></i><i class="a rt"></i></div>
        <div class="corner"></div>
      </div>
      <footer class="btns">
        <button class="w-help"><svg><use href="#helpc"/></svg>Help</button><button class="w-style">Style<i></i></button><button class="w-apply"><svg><use href="#okc"/></svg>Apply</button><button class="w-cancel"><svg><use href="#noc"/></svg><span><u>C</u>ancel</span></button><button class="w-ok"><svg><use href="#okc"/></svg><span><u>O</u>K</span></button>
      </footer>
    </div>
  </div>
</div>
</body>
</html>
```
FILE: styles.css
```css
* { box-sizing: border-box; }
body { margin: 0; width: 2546px; height: 1689px; overflow: hidden; background: #efefef; font: 28px/36px "Open Sans", "Noto Sans", sans-serif; color: #000; }
.grads { position: absolute; }
.symbols { display: none; }
ul, dl, dd, h1 { margin: 0; padding: 0; list-style: none; }
i, em { font-style: normal; }
svg { display: block; flex: none; }
svg.symbols { display: none; }
.window { width: 2546px; height: 1689px; display: flex; flex-direction: column; }
.backdrop { position: fixed; inset: 0; background: rgba(0, 0, 0, .31); }

.titlebar { height: 51px; flex: none; background: #ebebeb; border-bottom: 2px solid #b6b6b6; display: grid; grid-template-columns: 1fr auto 1fr; color: #3d3d3d; }
.title { grid-column: 2; font-weight: 700; line-height: 28px; white-space: nowrap; letter-spacing: .75px; }
.winbtns { grid-column: 3; display: flex; justify-content: flex-end; gap: 25px; margin-right: -9px; margin-top: -9px; }
.winbtns i { width: 43px; height: 43px; border-radius: 50%; background: #d9d9d9; }
.menubar { height: 39px; flex: none; border-bottom: 1px solid #cfcfcf; display: grid; grid-template-columns: 113px 74px 85px 92px 130px 115px 108px 106px 143px 80px 92px 163px 1fr; line-height: 38px; white-space: nowrap; }
.menubar span { margin-left: -1px; letter-spacing: .12px; }
u { text-decoration-thickness: 2px; text-underline-offset: 4px; }
.toolbar { height: 71px; flex: none; border-bottom: 1px solid #bdbdbd; background: linear-gradient(#fafafa, #efefef); display: flex; align-items: center; padding-left: 7px; }
.toolbar.last { height: 70px; }
.toolbar > svg { width: 58px; height: 48px; }
.toolbar > svg.on { height: 54px; margin: 0 1px; width: 56px; background: #dcdcdc; border: 1px solid #a8a8a8; border-radius: 3px; padding: 2px 3px; }
.toolbar > svg.nudge { padding-right: 4px; }
.off { opacity: .33; filter: saturate(.5); }
.toolbar b, .layersbar b { width: 24px; height: 9px; background: #505050; clip-path: polygon(3px 0, 19px 0, 11px 9px); }
.handle { width: 32px; height: 18px; background: radial-gradient(circle, #aaa .9px, transparent 1.100px) 19px 0 / 4px 4px; background-clip: content-box; padding-left: 19px; padding-right: 5px; }
.sep { width: 14px; height: 43px; background: linear-gradient(90deg, transparent 7px, #c8c8c8 7px, #c8c8c8 8px, transparent 8px); }
.tt { width: 133px; padding-left: 10px; display: flex; align-items: center; color: #4a5058; }
.tt > svg { width: 36px; height: 34px; }
.tt > div { display: flex; flex-direction: column; margin-left: 3px; }
.tt strong { font-size: 13.500px; line-height: 13px; letter-spacing: -.25px; }
.tt em { font-size: 9px; line-height: 8px; font-weight: 600; }
.field { width: 150px; height: 42px; margin: 0 2px; background: #fff; border: 1px solid #a0a0a0; border-radius: 3px; color: #777; line-height: 40px; padding-left: 3px; white-space: nowrap; letter-spacing: .3px; }

.work { flex: 1; display: flex; min-height: 0; }
.left { width: 930px; flex: none; display: flex; flex-direction: column; }
.dockhead { height: 40px; flex: none; display: flex; align-items: center; }
.dockhead span { margin-left: -14px; margin-top: -1px; flex: 1; }
.dockbtns { width: 28px; height: 12px; margin-right: 13px; margin-top: -2px; }
.dockbtns.r { width: 12px; margin-right: -6px; }
.dockbar { height: 54px; flex: none; display: flex; align-items: center; padding-bottom: 2px; margin-left: -11px; }
.dockbar > svg { width: 42px; height: 30px; }
.browser { height: 351px; flex: none; width: 918px; background: #fff; border: 1px solid #b2b2b2; border-left: 0; display: flex; overflow: hidden; }
.browser ul { flex: 1; }
.browser li { height: 36px; display: flex; align-items: center; padding-left: 10px; gap: 6px; line-height: 36px; }
.browser li svg { width: 32px; height: 31px; }
.vbar { width: 28px; border-left: 1px solid #b8b8b8; background: linear-gradient(90deg, #f4f4f4, #fdfdfd); }
.vbar .up { display: block; height: 28px; border-bottom: 1px solid #b8b8b8; overflow: hidden; }
.up::before { content: ""; display: block; width: 14px; height: 10px; margin: 9px auto 0; background: #505050; clip-path: polygon(50% 0, 100% 100%, 0 100%); }
.dn::before { content: ""; display: block; width: 14px; height: 10px; margin: 9px auto 0; background: #505050; clip-path: polygon(0 0, 100% 0, 50% 100%); }
.splitdots { width: 16px; height: 2px; margin: 4px 0 8px 443px; flex: none; background: repeating-linear-gradient(90deg, #aaa 0 1px, transparent 1px 3px); }
.layershead { height: 36px; }
.layersbar { height: 55px; padding-bottom: 2px; }
.layersbar b { width: 24px; margin-right: -1px; }
.layers { flex: 1; width: 918px; border-top: 1px solid #b2b2b2; border-right: 1px solid #b8b8b8; background: #fff; overflow: hidden; font-weight: 700; }
.lay { height: 36px; display: flex; align-items: center; padding-top: 3px; }
.lay.sel { height: 34px; background: #308cc6; color: #fff; padding-top: 2px; }
.tri { width: 26px; flex: none; }
.tri.show::before { content: ""; display: block; width: 14px; height: 9px; margin-left: -3px; background: #505050; clip-path: polygon(0 0, 100% 0, 50% 100%); }
.chk { width: 27px; height: 27px; background: #fff; border: 1px solid #a8a8a8; flex: none; margin-top: 1px; }
.dot { width: 17px; height: 17px; border: 1.500px solid #221a26; border-radius: 50%; background: #8f5b9b; margin-left: 12px; flex: none; }
.lname { margin-left: 13px; white-space: nowrap; letter-spacing: -.05px; line-height: 33px; }
.osm { width: 26px; height: 26px; margin-left: 11px; }
.osmname { margin-left: 8px; }
.hbar { height: 25px; flex: none; width: 918px; display: flex; border-top: 1px solid #b8b8b8; border-right: 1px solid #b8b8b8; }
.hbar i { background: linear-gradient(#fdfdfd, #f2f2f2); }
.lbtn { width: 11px; border-right: 1px solid #b8b8b8; }
.thumb { width: 480px; border-right: 1px solid #b8b8b8; }
.hbar .trough { flex: 1; background: #e4e4e4; }
.rbtn { width: 28px; border-left: 1px solid #b8b8b8; }
.rbtn::before { content: ""; display: block; width: 9px; height: 15px; margin: 5px 0 0 8px; background: #505050; clip-path: polygon(0 0, 100% 50%, 0 100%); }

.map { width: 1163px; flex: none; margin-top: 1px; border-left: 1px solid #b2b2b2; border-top: 1px solid #b2b2b2; background: #aad3df; overflow: hidden; }
.land { fill: #f2efe9; stroke: #b9a7c6; stroke-width: 1.500; }
.green path { fill: #c9dbb4; opacity: .75; }
.sand path { fill: #ead9ae; opacity: .7; }
.road { fill: none; stroke: #e892a2; stroke-width: 2; }
.edge { fill: none; stroke: #9a88ab; stroke-width: 1.500; vector-effect: non-scaling-stroke; stroke-linejoin: round; }
.edge path { vector-effect: non-scaling-stroke; }
.bord { fill: none; stroke: #a58bb0; stroke-width: 2; vector-effect: non-scaling-stroke; }
.reg { fill: none; stroke: #b3a0c0; stroke-width: 1; vector-effect: non-scaling-stroke; }
.lab { font: 9.500px "DejaVu Sans", sans-serif; fill: #333; stroke: #fff; stroke-opacity: .5; stroke-width: 2; paint-order: stroke; }
.lab .m { font-size: 12px; }
.lab .l { font-size: 12px; }
.ctry { fill: #6f4a7a; }
.prov { fill: #8d6a9c; }
.lab .it { font-style: italic; }
.poi circle { fill: #8f5b9b; stroke: #221a26; stroke-width: 1.300; }

.right { margin-left: 13px; width: 440px; flex: none; display: flex; flex-direction: column; }
.right .dockhead span { margin-left: 4px; }
.rbar { margin-left: 7px; height: 54px; }
.rbar i { width: 1px; height: 27px; background: #c4c4c4; margin: 0 6px 0 7px; }
.search { height: 42px; flex: none; margin-right: -10px; background: #fff; border: 1px solid #a8a8a8; border-radius: 3px; display: flex; align-items: center; }
.mag { width: 24px; height: 24px; margin-left: 14px; }
.search span { margin-left: 10px; flex: 1; }
.clr { width: 30px; height: 21px; }
.ptree { flex: 1; background: #fff; border: 1px solid #b2b2b2; border-top: 0; margin-right: -10px; padding-top: 1px; }
.ptree li { height: 36px; display: flex; align-items: center; white-space: nowrap; }
.ptree li svg { width: 31px; height: 31px; }
.exp { width: 43px; height: 16px; background: #505050; }
.exp.c { clip-path: polygon(15px 0, 24px 8px, 15px 16px); }
.exp.o { height: 9px; clip-path: polygon(13px 0, 28px 0, 20.500px 9px); }
.ptree li span { margin-left: 7px; line-height: 36px; }
.ptree .cg { margin-right: -3px; }
.ptree .ch svg { margin-left: 83px; }
.ptree .ch.sel { background: #308cc6; color: #fff; }

.dialog { position: absolute; left: 864px; top: 468px; width: 825px; height: 788px; border-radius: 24px 24px 0 0; background: #efefef; overflow: hidden; box-shadow: 0 0 0 1px rgba(0, 0, 0, .35), 0 6px 26px rgba(0, 0, 0, .5); display: flex; flex-direction: column; }
.dtitle { height: 75px; flex: none; background: #ebebeb; border-bottom: 2px solid #b9bdbc; border-top: 2px solid #fafafa; display: flex; align-items: center; padding: 0 15px 2px 8px; color: #3d3d3d; font-weight: 700; }
.dtitle span { flex: 1; white-space: nowrap; letter-spacing: .62px; }
.dtitle i { width: 43px; height: 43px; border-radius: 50%; background: #dadada; }
.dbody { flex: 1; display: flex; min-height: 0; }
.side { width: 157px; background: #5b5b5b; display: flex; flex-direction: column; flex: none; }
.sfind { height: 41px; flex: none; background: #fff; border: 1px solid #b0b0b0; border-radius: 3px; display: flex; align-items: center; padding: 0 0 2px 14px; margin-bottom: 12px; }
.sfind svg { width: 24px; height: 24px; }
.slist { flex: 1; display: flex; min-height: 0; }
.slist ul { width: 130px; overflow: hidden; color: #fff; }
.slist li { height: 52.800px; display: flex; align-items: center; gap: 8px; padding-left: 5px; white-space: nowrap; line-height: 34px; }
.slist li.two { height: 78.500px; }
.slist li span { margin-top: -3px; }
.slist li svg { width: 39px; height: 40px; margin-top: -1px; }
.slist li.cur { background: #efefef; color: #000; gap: 8px; padding-left: 9px; }
.dv { display: flex; flex-direction: column; width: 27px; border-left: 1px solid #b8b8b8; flex: none; }
.dv i, .dh i { background: linear-gradient(90deg, #fff, #f0f0f0); }
.dh i { background: linear-gradient(#fff, #f0f0f0); }
.dv .a { height: 28px; flex: none; overflow: hidden; }
.dv .th { height: 303px; border-top: 1px solid #b8b8b8; border-bottom: 1px solid #b8b8b8; }
.dv .tr { flex: 1; background: #e4e4e4; }
.dv .dn { border-top: 1px solid #b8b8b8; }
.pane { flex: 1; display: flex; flex-direction: column; padding: 3px 5px 0 8px; margin-left: 0; }
.frame { width: 655px; height: 646px; border: 1px solid #b2b2b2; display: grid; grid-template-columns: 626px 27px; grid-template-rows: 616px 28px; background: #fff; }
article { font-family: Lato, sans-serif; padding: 13px 4px 0; overflow: hidden; }
h1 { font: 44px/52px Lato, sans-serif; color: #589632; padding: 0 0 25px 9px; border-bottom: 1px solid #999; width: 619px; }
dl { display: grid; grid-template-columns: 201px 1fr; row-gap: 2px; padding: 14px 0 0 32px; line-height: 35px; font-size: 29px; white-space: nowrap; }
dt { font-weight: 700; }
dd em { font-style: italic; }
.fv { width: 27px; }
.fv .t1 { flex: none; height: 71px; border-top: 1px solid #b8b8b8; }
.fv .th { height: 54px; flex: none; }
.dh { display: flex; border-top: 1px solid #b2b2b2; }
.dh .a { width: 28px; }
.dh .th { flex: 1; border-left: 1px solid #b8b8b8; border-right: 1px solid #b8b8b8; }
.lf::before, .rt::before { content: ""; display: block; width: 9px; height: 15px; margin: 6px 0 0 9px; background: #505050; clip-path: polygon(0 0, 100% 50%, 0 100%); }
.lf::before { transform: scaleX(-1); }
.corner { background: #efefef; border-left: 1px solid #b8b8b8; border-top: 1px solid #b8b8b8; }
.btns { display: flex; justify-content: space-between; align-items: center; height: 48px; width: 655px; margin-top: 12px; }
button { font: inherit; height: 46px; padding: 0 0 0 7px; border: 1px solid #b0b0b0; border-radius: 3px; background: linear-gradient(#fdfdfd, #efefef); display: flex; align-items: center; gap: 3px; color: #000; line-height: 42px; white-space: nowrap; }
button svg { width: 32px; height: 32px; }
.w-help { width: 112px; }
.w-style { width: 140px; height: 48px; padding-left: 24px; justify-content: space-between; letter-spacing: .3px; }
.w-style i { width: 16px; height: 9px; background: #606060; clip-path: polygon(0 0, 100% 0, 50% 100%); margin-right: 5px; }
.w-apply { width: 127px; }
.w-cancel { width: 138px; }
.w-ok { width: 92px; border-color: #3a7fb0; background: linear-gradient(#f6f9fc, #d8e2ec); }
button u { text-decoration-thickness: 3px; text-underline-offset: 5px; }
```
